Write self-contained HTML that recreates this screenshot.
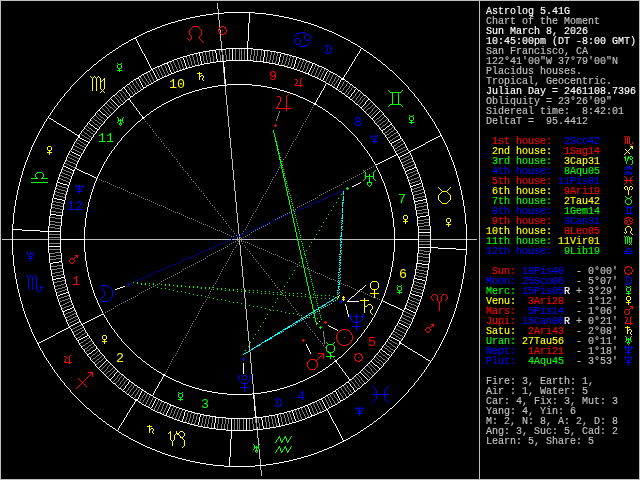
<!DOCTYPE html><html><head><meta charset="utf-8"><title>Astrolog 5.41G</title><style>
html,body{margin:0;padding:0;background:#000;}
body{width:640px;height:480px;overflow:hidden;position:relative;}
svg{position:absolute;left:0;top:0;will-change:transform;}
#side{position:absolute;left:486px;top:7px;margin:0;font:10px/10px "Liberation Mono",monospace;white-space:pre;color:#c0c0c0;-webkit-text-stroke:0.15px;will-change:transform;}
#side div{height:10px;}
.h{font:13.33px "Liberation Mono",monospace;}
</style></head><body>
<svg width="640" height="480" viewBox="0 0 640 480" shape-rendering="crispEdges"><g fill="none" stroke-width="1" transform="translate(0,0.5)">
<path stroke="#c0c0c0" d="M0 0h640M0 1h1M479 1h1M639 1h1M0 2h1M479 2h1M639 2h1M0 3h1M217 3h1M479 3h1M639 3h1M0 4h1M217 4h1M479 4h1M639 4h1M0 5h1M217 5h1M479 5h1M639 5h1M0 6h1M217 6h1M479 6h1M639 6h1M0 7h1M217 7h1M479 7h1M639 7h1M0 8h1M217 8h1M479 8h1M639 8h1M0 9h1M218 9h1M479 9h1M639 9h1M0 10h1M218 10h1M479 10h1M639 10h1M0 11h1M218 11h1M479 11h1M639 11h1M0 12h1M218 12h1M479 12h1M639 12h1M0 13h1M479 13h1M639 13h1M0 14h1M218 14h1M479 14h1M639 14h1M0 15h1M218 15h1M479 15h1M639 15h1M0 16h1M218 16h1M479 16h1M639 16h1M0 17h1M218 17h1M479 17h1M639 17h1M0 18h1M218 18h1M479 18h1M639 18h1M0 19h1M218 19h1M479 19h1M639 19h1M0 20h1M219 20h1M479 20h1M639 20h1M0 21h1M219 21h1M479 21h1M639 21h1M0 22h1M219 22h1M479 22h1M639 22h1M0 23h1M219 23h1M479 23h1M639 23h1M0 24h1M219 24h1M479 24h1M639 24h1M0 25h1M219 25h1M479 25h1M639 25h1M0 26h1M219 26h1M479 26h1M639 26h1M0 27h1M479 27h1M639 27h1M0 28h1M479 28h1M639 28h1M0 29h1M219 29h1M479 29h1M639 29h1M0 30h1M220 30h1M479 30h1M639 30h1M0 31h1M220 31h1M479 31h1M639 31h1M0 32h1M220 32h1M479 32h1M639 32h1M0 33h1M479 33h1M639 33h1M0 34h1M220 34h1M479 34h1M639 34h1M0 35h1M220 35h1M479 35h1M639 35h1M0 36h1M220 36h1M479 36h1M639 36h1M0 37h1M220 37h1M479 37h1M639 37h1M0 38h1M220 38h1M479 38h1M639 38h1M0 39h1M220 39h1M479 39h1M639 39h1M0 40h1M220 40h1M479 40h1M639 40h1M0 41h1M221 41h1M479 41h1M639 41h1M0 42h1M221 42h1M479 42h1M639 42h1M0 43h1M221 43h1M479 43h1M639 43h1M0 44h1M221 44h1M479 44h1M639 44h1M0 45h1M221 45h1M479 45h1M639 45h1M0 46h1M221 46h1M479 46h1M639 46h1M0 47h1M221 47h1M479 47h1M639 47h1M0 48h1M221 48h1M479 48h1M639 48h1M0 49h1M479 49h1M639 49h1M0 50h1M221 50h1M479 50h1M639 50h1M0 51h1M221 51h1M479 51h1M639 51h1M0 52h1M479 52h1M639 52h1M0 53h1M479 53h1M639 53h1M0 54h1M479 54h1M639 54h1M0 55h1M222 55h1M479 55h1M639 55h1M0 56h1M222 56h1M479 56h1M639 56h1M0 57h1M222 57h1M479 57h1M639 57h1M0 58h1M222 58h1M479 58h1M639 58h1M0 59h1M222 59h1M479 59h1M639 59h1M0 60h1M222 60h1M479 60h1M639 60h1M0 61h1M479 61h1M639 61h1M0 62h1M479 62h1M639 62h1M0 63h1M479 63h1M639 63h1M0 64h1M479 64h1M639 64h1M0 65h1M479 65h1M639 65h1M0 66h1M479 66h1M639 66h1M0 67h1M223 67h1M479 67h1M639 67h1M0 68h1M223 68h1M479 68h1M639 68h1M0 69h1M223 69h1M479 69h1M639 69h1M0 70h1M223 70h1M479 70h1M639 70h1M0 71h1M223 71h1M479 71h1M639 71h1M0 72h1M223 72h1M479 72h1M639 72h1M0 73h1M479 73h1M639 73h1M0 74h1M479 74h1M639 74h1M0 75h1M479 75h1M639 75h1M0 76h1M479 76h1M639 76h1M0 77h1M479 77h1M639 77h1M0 78h1M479 78h1M639 78h1M0 79h1M224 79h1M479 79h1M639 79h1M0 80h1M224 80h1M479 80h1M639 80h1M0 81h1M224 81h1M479 81h1M639 81h1M0 82h1M224 82h1M479 82h1M639 82h1M0 83h1M224 83h1M479 83h1M639 83h1M0 84h1M479 84h1M639 84h1M0 85h1M479 85h1M639 85h1M0 86h1M225 86h1M479 86h1M639 86h1M0 87h1M225 87h1M479 87h1M639 87h1M0 88h1M225 88h1M479 88h1M639 88h1M0 89h1M225 89h1M479 89h1M639 89h1M0 90h1M225 90h1M479 90h1M639 90h1M0 91h1M225 91h1M479 91h1M639 91h1M0 92h1M225 92h1M479 92h1M639 92h1M0 93h1M225 93h1M479 93h1M639 93h1M0 94h1M225 94h1M479 94h1M639 94h1M0 95h1M226 95h1M479 95h1M639 95h1M0 96h1M226 96h1M479 96h1M639 96h1M0 97h1M226 97h1M479 97h1M639 97h1M0 98h1M226 98h1M479 98h1M639 98h1M0 99h1M226 99h1M479 99h1M639 99h1M0 100h1M226 100h1M479 100h1M639 100h1M0 101h1M226 101h1M479 101h1M639 101h1M0 102h1M226 102h1M479 102h1M639 102h1M0 103h1M226 103h1M479 103h1M639 103h1M0 104h1M226 104h1M479 104h1M639 104h1M0 105h1M227 105h1M479 105h1M639 105h1M0 106h1M227 106h1M479 106h1M639 106h1M0 107h1M227 107h1M479 107h1M639 107h1M0 108h1M227 108h1M479 108h1M639 108h1M0 109h1M227 109h1M479 109h1M639 109h1M0 110h1M227 110h1M479 110h1M639 110h1M0 111h1M227 111h1M479 111h1M639 111h1M0 112h1M227 112h1M479 112h1M639 112h1M0 113h1M227 113h1M479 113h1M639 113h1M0 114h1M227 114h1M479 114h1M639 114h1M0 115h1M227 115h1M479 115h1M639 115h1M0 116h1M228 116h1M479 116h1M639 116h1M0 117h1M228 117h1M479 117h1M639 117h1M0 118h1M228 118h1M479 118h1M639 118h1M0 119h1M228 119h1M479 119h1M639 119h1M0 120h1M228 120h1M479 120h1M639 120h1M0 121h1M228 121h1M479 121h1M639 121h1M0 122h1M228 122h1M479 122h1M639 122h1M0 123h1M228 123h1M479 123h1M639 123h1M0 124h1M228 124h1M479 124h1M639 124h1M0 125h1M228 125h1M479 125h1M639 125h1M0 126h1M228 126h1M479 126h1M639 126h1M0 127h1M229 127h1M479 127h1M639 127h1M0 128h1M229 128h1M479 128h1M639 128h1M0 129h1M229 129h1M479 129h1M639 129h1M0 130h1M229 130h1M479 130h1M639 130h1M0 131h1M229 131h1M479 131h1M639 131h1M0 132h1M229 132h1M479 132h1M639 132h1M0 133h1M229 133h1M479 133h1M639 133h1M0 134h1M229 134h1M479 134h1M639 134h1M0 135h1M229 135h1M479 135h1M639 135h1M0 136h1M229 136h1M479 136h1M639 136h1M0 137h1M229 137h1M479 137h1M639 137h1M0 138h1M230 138h1M479 138h1M639 138h1M0 139h1M230 139h1M479 139h1M639 139h1M0 140h1M230 140h1M479 140h1M639 140h1M0 141h1M230 141h1M479 141h1M639 141h1M0 142h1M230 142h1M479 142h1M639 142h1M0 143h1M230 143h1M479 143h1M639 143h1M0 144h1M230 144h1M479 144h1M639 144h1M0 145h1M230 145h1M479 145h1M639 145h1M0 146h1M230 146h1M479 146h1M639 146h1M0 147h1M230 147h1M479 147h1M639 147h1M0 148h1M231 148h1M479 148h1M639 148h1M0 149h1M231 149h1M479 149h1M639 149h1M0 150h1M231 150h1M479 150h1M639 150h1M0 151h1M231 151h1M479 151h1M639 151h1M0 152h1M231 152h1M479 152h1M639 152h1M0 153h1M231 153h1M479 153h1M639 153h1M0 154h1M231 154h1M479 154h1M639 154h1M0 155h1M231 155h1M479 155h1M639 155h1M0 156h1M231 156h1M479 156h1M639 156h1M0 157h1M231 157h1M479 157h1M639 157h1M0 158h1M231 158h1M479 158h1M639 158h1M0 159h1M232 159h1M479 159h1M639 159h1M0 160h1M232 160h1M479 160h1M639 160h1M0 161h1M232 161h1M479 161h1M639 161h1M0 162h1M232 162h1M479 162h1M639 162h1M0 163h1M232 163h1M479 163h1M639 163h1M0 164h1M232 164h1M479 164h1M639 164h1M0 165h1M232 165h1M479 165h1M639 165h1M0 166h1M232 166h1M479 166h1M639 166h1M0 167h1M232 167h1M479 167h1M639 167h1M0 168h1M232 168h1M479 168h1M639 168h1M0 169h1M232 169h1M479 169h1M639 169h1M0 170h1M233 170h1M479 170h1M639 170h1M0 171h1M233 171h1M479 171h1M639 171h1M0 172h1M233 172h1M479 172h1M639 172h1M0 173h1M233 173h1M479 173h1M639 173h1M0 174h1M233 174h1M479 174h1M639 174h1M0 175h1M233 175h1M479 175h1M639 175h1M0 176h1M233 176h1M479 176h1M639 176h1M0 177h1M233 177h1M479 177h1M639 177h1M0 178h1M233 178h1M479 178h1M639 178h1M0 179h1M233 179h1M479 179h1M639 179h1M0 180h1M234 180h1M479 180h1M639 180h1M0 181h1M234 181h1M479 181h1M639 181h1M0 182h1M234 182h1M479 182h1M639 182h1M0 183h1M234 183h1M479 183h1M639 183h1M0 184h1M234 184h1M479 184h1M639 184h1M0 185h1M234 185h1M479 185h1M639 185h1M0 186h1M234 186h1M479 186h1M639 186h1M0 187h1M234 187h1M479 187h1M639 187h1M0 188h1M234 188h1M479 188h1M639 188h1M0 189h1M234 189h1M479 189h1M639 189h1M0 190h1M234 190h1M479 190h1M639 190h1M0 191h1M235 191h1M479 191h1M639 191h1M0 192h1M235 192h1M479 192h1M639 192h1M0 193h1M235 193h1M479 193h1M639 193h1M0 194h1M235 194h1M479 194h1M639 194h1M0 195h1M235 195h1M479 195h1M639 195h1M0 196h1M235 196h1M479 196h1M639 196h1M0 197h1M235 197h1M479 197h1M639 197h1M0 198h1M235 198h1M479 198h1M639 198h1M0 199h1M235 199h1M479 199h1M639 199h1M0 200h1M235 200h1M479 200h1M639 200h1M0 201h1M235 201h1M479 201h1M639 201h1M0 202h1M236 202h1M479 202h1M639 202h1M0 203h1M236 203h1M479 203h1M639 203h1M0 204h1M236 204h1M479 204h1M639 204h1M0 205h1M236 205h1M479 205h1M639 205h1M0 206h1M236 206h1M479 206h1M639 206h1M0 207h1M236 207h1M479 207h1M639 207h1M0 208h1M236 208h1M479 208h1M639 208h1M0 209h1M236 209h1M479 209h1M639 209h1M0 210h1M236 210h1M479 210h1M639 210h1M0 211h1M236 211h1M479 211h1M639 211h1M0 212h1M236 212h1M479 212h1M639 212h1M0 213h1M237 213h1M479 213h1M639 213h1M0 214h1M237 214h1M479 214h1M639 214h1M0 215h1M237 215h1M479 215h1M639 215h1M0 216h1M237 216h1M479 216h1M639 216h1M0 217h1M237 217h1M479 217h1M639 217h1M0 218h1M237 218h1M479 218h1M639 218h1M0 219h1M237 219h1M479 219h1M639 219h1M0 220h1M237 220h1M479 220h1M639 220h1M0 221h1M237 221h1M479 221h1M639 221h1M0 222h1M237 222h1M479 222h1M639 222h1M0 223h1M238 223h1M479 223h1M639 223h1M0 224h1M238 224h1M479 224h1M639 224h1M0 225h1M238 225h1M479 225h1M639 225h1M0 226h1M238 226h1M479 226h1M639 226h1M0 227h1M238 227h1M479 227h1M639 227h1M0 228h1M238 228h1M479 228h1M639 228h1M0 229h1M238 229h1M479 229h1M639 229h1M0 230h1M238 230h1M479 230h1M639 230h1M0 231h1M238 231h1M479 231h1M639 231h1M0 232h1M238 232h1M479 232h1M639 232h1M0 233h1M238 233h1M479 233h1M639 233h1M0 234h1M239 234h1M479 234h1M639 234h1M0 235h1M239 235h1M479 235h1M639 235h1M0 236h1M479 236h1M639 236h1M0 237h1M239 237h1M479 237h1M639 237h1M0 238h1M239 238h1M479 238h1M639 238h1M0 239h1M2 239h10M13 239h35M85 239h146M232 239h7M240 239h57M298 239h3M302 239h39M342 239h52M431 239h35M467 239h10M479 239h1M639 239h1M0 240h1M239 240h1M479 240h1M639 240h1M0 241h1M239 241h1M479 241h1M639 241h1M0 242h1M239 242h1M479 242h1M639 242h1M0 243h1M239 243h1M479 243h1M639 243h1M0 244h1M239 244h1M479 244h1M639 244h1M0 245h1M240 245h1M479 245h1M639 245h1M0 246h1M240 246h1M479 246h1M639 246h1M0 247h1M240 247h1M479 247h1M639 247h1M0 248h1M240 248h1M479 248h1M639 248h1M0 249h1M240 249h1M479 249h1M639 249h1M0 250h1M240 250h1M479 250h1M639 250h1M0 251h1M240 251h1M479 251h1M639 251h1M0 252h1M240 252h1M479 252h1M639 252h1M0 253h1M240 253h1M479 253h1M639 253h1M0 254h1M240 254h1M479 254h1M639 254h1M0 255h1M240 255h1M479 255h1M639 255h1M0 256h1M241 256h1M479 256h1M639 256h1M0 257h1M241 257h1M479 257h1M639 257h1M0 258h1M241 258h1M479 258h1M639 258h1M0 259h1M241 259h1M479 259h1M639 259h1M0 260h1M241 260h1M479 260h1M639 260h1M0 261h1M241 261h1M479 261h1M639 261h1M0 262h1M241 262h1M479 262h1M639 262h1M0 263h1M241 263h1M479 263h1M639 263h1M0 264h1M241 264h1M479 264h1M639 264h1M0 265h1M241 265h1M479 265h1M639 265h1M0 266h1M242 266h1M479 266h1M639 266h1M0 267h1M242 267h1M479 267h1M639 267h1M0 268h1M242 268h1M479 268h1M639 268h1M0 269h1M242 269h1M479 269h1M639 269h1M0 270h1M242 270h1M479 270h1M639 270h1M0 271h1M242 271h1M479 271h1M639 271h1M0 272h1M242 272h1M479 272h1M639 272h1M0 273h1M242 273h1M479 273h1M639 273h1M0 274h1M242 274h1M479 274h1M639 274h1M0 275h1M242 275h1M479 275h1M639 275h1M0 276h1M242 276h1M479 276h1M639 276h1M0 277h1M243 277h1M479 277h1M639 277h1M0 278h1M243 278h1M479 278h1M639 278h1M0 279h1M243 279h1M479 279h1M639 279h1M0 280h1M243 280h1M479 280h1M639 280h1M0 281h1M243 281h1M479 281h1M639 281h1M0 282h1M243 282h1M479 282h1M639 282h1M0 283h1M243 283h1M479 283h1M639 283h1M0 284h1M243 284h1M479 284h1M639 284h1M0 285h1M243 285h1M479 285h1M639 285h1M0 286h1M243 286h1M479 286h1M639 286h1M0 287h1M243 287h1M479 287h1M639 287h1M0 288h1M244 288h1M479 288h1M639 288h1M0 289h1M244 289h1M479 289h1M639 289h1M0 290h1M244 290h1M479 290h1M639 290h1M0 291h1M244 291h1M479 291h1M639 291h1M0 292h1M244 292h1M479 292h1M639 292h1M0 293h1M244 293h1M479 293h1M639 293h1M0 294h1M244 294h1M479 294h1M639 294h1M0 295h1M244 295h1M479 295h1M639 295h1M0 296h1M244 296h1M479 296h1M639 296h1M0 297h1M244 297h1M479 297h1M639 297h1M0 298h1M245 298h1M479 298h1M639 298h1M0 299h1M245 299h1M479 299h1M639 299h1M0 300h1M245 300h1M479 300h1M639 300h1M0 301h1M245 301h1M479 301h1M639 301h1M0 302h1M245 302h1M479 302h1M639 302h1M0 303h1M245 303h1M479 303h1M639 303h1M0 304h1M479 304h1M639 304h1M0 305h1M245 305h1M479 305h1M639 305h1M0 306h1M245 306h1M479 306h1M639 306h1M0 307h1M245 307h1M479 307h1M639 307h1M0 308h1M245 308h1M479 308h1M639 308h1M0 309h1M246 309h1M479 309h1M639 309h1M0 310h1M246 310h1M479 310h1M639 310h1M0 311h1M246 311h1M479 311h1M639 311h1M0 312h1M246 312h1M479 312h1M639 312h1M0 313h1M246 313h1M479 313h1M639 313h1M0 314h1M246 314h1M479 314h1M639 314h1M0 315h1M246 315h1M479 315h1M639 315h1M0 316h1M246 316h1M479 316h1M639 316h1M0 317h1M246 317h1M479 317h1M639 317h1M0 318h1M246 318h1M479 318h1M639 318h1M0 319h1M246 319h1M479 319h1M639 319h1M0 320h1M247 320h1M479 320h1M639 320h1M0 321h1M247 321h1M479 321h1M639 321h1M0 322h1M247 322h1M479 322h1M639 322h1M0 323h1M247 323h1M479 323h1M639 323h1M0 324h1M247 324h1M479 324h1M639 324h1M0 325h1M247 325h1M479 325h1M639 325h1M0 326h1M247 326h1M479 326h1M639 326h1M0 327h1M247 327h1M479 327h1M639 327h1M0 328h1M247 328h1M479 328h1M639 328h1M0 329h1M247 329h1M479 329h1M639 329h1M0 330h1M247 330h1M479 330h1M639 330h1M0 331h1M248 331h1M479 331h1M639 331h1M0 332h1M248 332h1M479 332h1M639 332h1M0 333h1M248 333h1M479 333h1M639 333h1M0 334h1M248 334h1M479 334h1M639 334h1M0 335h1M248 335h1M479 335h1M639 335h1M0 336h1M248 336h1M479 336h1M639 336h1M0 337h1M248 337h1M479 337h1M639 337h1M0 338h1M248 338h1M479 338h1M639 338h1M0 339h1M248 339h1M479 339h1M639 339h1M0 340h1M248 340h1M479 340h1M639 340h1M0 341h1M249 341h1M479 341h1M639 341h1M0 342h1M249 342h1M479 342h1M639 342h1M0 343h1M249 343h1M479 343h1M639 343h1M0 344h1M249 344h1M479 344h1M639 344h1M0 345h1M249 345h1M479 345h1M639 345h1M0 346h1M249 346h1M479 346h1M639 346h1M0 347h1M249 347h1M479 347h1M639 347h1M0 348h1M249 348h1M479 348h1M639 348h1M0 349h1M249 349h1M479 349h1M639 349h1M0 350h1M479 350h1M639 350h1M0 351h1M249 351h1M479 351h1M639 351h1M0 352h1M250 352h1M479 352h1M639 352h1M0 353h1M250 353h1M479 353h1M639 353h1M0 354h1M250 354h1M479 354h1M639 354h1M0 355h1M250 355h1M479 355h1M639 355h1M0 356h1M250 356h1M479 356h1M639 356h1M0 357h1M250 357h1M479 357h1M639 357h1M0 358h1M250 358h1M479 358h1M639 358h1M0 359h1M250 359h1M479 359h1M639 359h1M0 360h1M250 360h1M479 360h1M639 360h1M0 361h1M250 361h1M479 361h1M639 361h1M0 362h1M250 362h1M479 362h1M639 362h1M0 363h1M251 363h1M479 363h1M639 363h1M0 364h1M251 364h1M479 364h1M639 364h1M0 365h1M251 365h1M479 365h1M639 365h1M0 366h1M251 366h1M479 366h1M639 366h1M0 367h1M251 367h1M479 367h1M639 367h1M0 368h1M251 368h1M479 368h1M639 368h1M0 369h1M251 369h1M479 369h1M639 369h1M0 370h1M251 370h1M479 370h1M639 370h1M0 371h1M251 371h1M479 371h1M639 371h1M0 372h1M251 372h1M479 372h1M639 372h1M0 373h1M251 373h1M479 373h1M639 373h1M0 374h1M252 374h1M479 374h1M639 374h1M0 375h1M252 375h1M479 375h1M639 375h1M0 376h1M252 376h1M479 376h1M639 376h1M0 377h1M252 377h1M479 377h1M639 377h1M0 378h1M252 378h1M479 378h1M639 378h1M0 379h1M252 379h1M479 379h1M639 379h1M0 380h1M252 380h1M479 380h1M639 380h1M0 381h1M252 381h1M479 381h1M639 381h1M0 382h1M252 382h1M479 382h1M639 382h1M0 383h1M252 383h1M479 383h1M639 383h1M0 384h1M253 384h1M479 384h1M639 384h1M0 385h1M253 385h1M479 385h1M639 385h1M0 386h1M253 386h1M479 386h1M639 386h1M0 387h1M253 387h1M479 387h1M639 387h1M0 388h1M253 388h1M479 388h1M639 388h1M0 389h1M253 389h1M479 389h1M639 389h1M0 390h1M253 390h1M479 390h1M639 390h1M0 391h1M253 391h1M479 391h1M639 391h1M0 392h1M253 392h1M479 392h1M639 392h1M0 393h1M479 393h1M639 393h1M0 394h1M479 394h1M639 394h1M0 395h1M254 395h1M479 395h1M639 395h1M0 396h1M254 396h1M479 396h1M639 396h1M0 397h1M254 397h1M479 397h1M639 397h1M0 398h1M254 398h1M479 398h1M639 398h1M0 399h1M479 399h1M639 399h1M0 400h1M479 400h1M639 400h1M0 401h1M479 401h1M639 401h1M0 402h1M479 402h1M639 402h1M0 403h1M479 403h1M639 403h1M0 404h1M479 404h1M639 404h1M0 405h1M479 405h1M639 405h1M0 406h1M255 406h1M479 406h1M639 406h1M0 407h1M255 407h1M479 407h1M639 407h1M0 408h1M255 408h1M479 408h1M639 408h1M0 409h1M255 409h1M479 409h1M639 409h1M0 410h1M255 410h1M479 410h1M639 410h1M0 411h1M479 411h1M639 411h1M0 412h1M479 412h1M639 412h1M0 413h1M479 413h1M639 413h1M0 414h1M479 414h1M639 414h1M0 415h1M479 415h1M639 415h1M0 416h1M256 416h1M479 416h1M639 416h1M0 417h1M479 417h1M639 417h1M0 418h1M256 418h1M479 418h1M639 418h1M0 419h1M256 419h1M479 419h1M639 419h1M0 420h1M256 420h1M479 420h1M639 420h1M0 421h1M256 421h1M479 421h1M639 421h1M0 422h1M256 422h1M479 422h1M639 422h1M0 423h1M479 423h1M639 423h1M0 424h1M479 424h1M639 424h1M0 425h1M479 425h1M639 425h1M0 426h1M479 426h1M639 426h1M0 427h1M257 427h1M479 427h1M639 427h1M0 428h1M257 428h1M479 428h1M639 428h1M0 429h1M479 429h1M639 429h1M0 430h1M257 430h1M479 430h1M639 430h1M0 431h1M257 431h1M479 431h1M639 431h1M0 432h1M257 432h1M479 432h1M639 432h1M0 433h1M257 433h1M479 433h1M639 433h1M0 434h1M257 434h1M479 434h1M639 434h1M0 435h1M257 435h1M479 435h1M639 435h1M0 436h1M257 436h1M479 436h1M639 436h1M0 437h1M257 437h1M479 437h1M639 437h1M0 438h1M258 438h1M479 438h1M639 438h1M0 439h1M258 439h1M479 439h1M639 439h1M0 440h1M258 440h1M479 440h1M639 440h1M0 441h1M258 441h1M479 441h1M639 441h1M0 442h1M258 442h1M479 442h1M639 442h1M0 443h1M258 443h1M479 443h1M639 443h1M0 444h1M258 444h1M479 444h1M639 444h1M0 445h1M479 445h1M639 445h1M0 446h1M479 446h1M639 446h1M0 447h1M479 447h1M639 447h1M0 448h1M479 448h1M639 448h1M0 449h1M479 449h1M639 449h1M0 450h1M259 450h1M479 450h1M639 450h1M0 451h1M259 451h1M479 451h1M639 451h1M0 452h1M259 452h1M479 452h1M639 452h1M0 453h1M259 453h1M479 453h1M639 453h1M0 454h1M259 454h1M479 454h1M639 454h1M0 455h1M259 455h1M479 455h1M639 455h1M0 456h1M259 456h1M479 456h1M639 456h1M0 457h1M259 457h1M479 457h1M639 457h1M0 458h1M259 458h1M479 458h1M639 458h1M0 459h1M260 459h1M479 459h1M639 459h1M0 460h1M260 460h1M479 460h1M639 460h1M0 461h1M260 461h1M479 461h1M639 461h1M0 462h1M260 462h1M479 462h1M639 462h1M0 463h1M260 463h1M479 463h1M639 463h1M0 464h1M260 464h1M479 464h1M639 464h1M0 465h1M479 465h1M639 465h1M0 466h1M260 466h1M479 466h1M639 466h1M0 467h1M260 467h1M479 467h1M639 467h1M0 468h1M260 468h1M479 468h1M639 468h1M0 469h1M260 469h1M479 469h1M639 469h1M0 470h1M261 470h1M479 470h1M639 470h1M0 471h1M261 471h1M479 471h1M639 471h1M0 472h1M261 472h1M479 472h1M639 472h1M0 473h1M261 473h1M479 473h1M639 473h1M0 474h1M261 474h1M479 474h1M639 474h1M0 475h1M261 475h1M479 475h1M639 475h1M0 476h1M479 476h1M639 476h1M0 477h1M479 477h1M639 477h1M0 478h1M479 478h1M639 478h1M0 479h640"/>
<path stroke="#ffffff" d="M224 12h31M213 13h11M249 13h1M255 13h11M206 14h7M249 14h1M266 14h7M200 15h6M249 15h1M273 15h6M195 16h5M249 16h1M279 16h5M190 17h5M249 17h1M284 17h5M186 18h4M249 18h1M289 18h4M182 19h4M249 19h1M293 19h4M178 20h4M249 20h1M297 20h4M175 21h3M249 21h1M301 21h3M171 22h4M249 22h1M304 22h4M168 23h3M248 23h1M308 23h3M165 24h3M248 24h1M311 24h3M162 25h3M248 25h1M314 25h3M160 26h2M248 26h1M317 26h2M157 27h3M248 27h1M319 27h3M155 28h2M248 28h1M322 28h2M152 29h3M248 29h1M324 29h3M150 30h2M248 30h1M327 30h2M147 31h3M248 31h1M329 31h3M145 32h2M248 32h1M332 32h2M143 33h2M248 33h1M334 33h2M141 34h2M248 34h1M336 34h2M139 35h2M248 35h1M338 35h2M137 36h2M248 36h1M340 36h2M135 37h2M248 37h1M342 37h2M133 38h3M248 38h1M344 38h2M131 39h2M136 39h1M248 39h1M346 39h2M129 40h2M136 40h1M248 40h1M348 40h2M128 41h1M137 41h1M247 41h1M350 41h1M126 42h2M137 42h1M247 42h1M351 42h2M124 43h2M138 43h1M247 43h1M353 43h2M122 44h2M138 44h1M247 44h1M355 44h2M121 45h1M139 45h1M247 45h1M357 45h1M119 46h2M139 46h1M247 46h1M358 46h2M118 47h1M140 47h1M247 47h1M360 47h1M116 48h2M140 48h1M226 48h27M361 48h2M115 49h1M141 49h1M216 49h10M232 49h1M247 49h1M253 49h10M360 49h1M363 49h1M113 50h2M141 50h1M209 50h7M232 50h1M247 50h1M263 50h7M360 50h1M364 50h2M112 51h1M142 51h1M203 51h6M215 51h1M232 51h1M247 51h1M264 51h1M270 51h6M359 51h1M366 51h1M110 52h2M142 52h1M198 52h5M215 52h1M232 52h1M247 52h1M264 52h1M276 52h5M359 52h1M367 52h2M109 53h1M143 53h1M194 53h4M199 53h1M216 53h1M232 53h1M247 53h1M264 53h1M281 53h4M358 53h1M369 53h1M107 54h2M144 54h1M190 54h4M199 54h1M216 54h1M232 54h1M247 54h1M264 54h1M280 54h1M285 54h4M357 54h1M370 54h2M106 55h1M144 55h1M187 55h3M199 55h1M216 55h1M232 55h1M247 55h1M264 55h1M280 55h1M289 55h3M357 55h1M372 55h1M105 56h1M145 56h1M183 56h4M200 56h1M216 56h1M232 56h1M247 56h1M264 56h1M280 56h1M292 56h4M356 56h1M373 56h1M103 57h2M145 57h1M180 57h3M200 57h1M216 57h1M232 57h1M247 57h1M263 57h1M279 57h1M296 57h3M355 57h1M374 57h2M102 58h1M146 58h1M177 58h3M183 58h1M200 58h1M216 58h1M232 58h1M247 58h1M263 58h1M279 58h1M296 58h1M299 58h3M355 58h1M376 58h1M101 59h1M146 59h1M174 59h3M183 59h1M200 59h1M217 59h1M232 59h1M247 59h1M263 59h1M279 59h1M296 59h1M302 59h3M354 59h1M377 59h1M99 60h2M147 60h1M172 60h2M184 60h1M200 60h1M217 60h1M226 60h27M263 60h1M279 60h1M295 60h1M305 60h2M354 60h1M378 60h2M98 61h1M147 61h1M169 61h3M184 61h1M201 61h1M216 61h10M253 61h11M279 61h1M295 61h1M307 61h3M353 61h1M380 61h1M97 62h1M148 62h1M167 62h2M184 62h1M201 62h1M210 62h6M223 62h1M263 62h6M278 62h1M295 62h1M310 62h2M352 62h1M381 62h1M96 63h1M148 63h1M164 63h4M185 63h1M201 63h1M204 63h6M223 63h1M269 63h6M278 63h1M295 63h1M312 63h3M352 63h1M382 63h1M94 64h2M149 64h1M162 64h2M167 64h1M185 64h1M200 64h4M223 64h1M275 64h4M294 64h1M312 64h1M315 64h2M351 64h1M383 64h2M93 65h1M149 65h1M160 65h2M168 65h1M185 65h1M195 65h5M223 65h1M279 65h5M294 65h1M312 65h1M317 65h2M351 65h1M385 65h1M92 66h1M150 66h1M157 66h3M168 66h1M186 66h1M192 66h3M223 66h1M284 66h3M294 66h1M311 66h1M319 66h3M350 66h1M386 66h1M91 67h1M150 67h1M155 67h2M169 67h1M186 67h1M188 67h4M224 67h1M287 67h4M293 67h1M311 67h1M322 67h2M349 67h1M387 67h1M90 68h1M151 68h1M153 68h2M169 68h1M185 68h3M224 68h1M291 68h3M310 68h1M324 68h2M349 68h1M388 68h1M89 69h1M151 69h2M169 69h1M182 69h3M224 69h1M294 69h3M310 69h1M326 69h2M348 69h1M389 69h1M87 70h2M150 70h1M152 70h1M170 70h1M179 70h3M224 70h1M297 70h3M309 70h1M328 70h1M348 70h1M390 70h2M86 71h1M148 71h2M153 71h1M170 71h1M176 71h3M224 71h1M300 71h3M309 71h1M327 71h1M329 71h2M347 71h1M392 71h1M85 72h1M146 72h2M153 72h1M171 72h1M174 72h2M224 72h1M303 72h2M308 72h1M326 72h1M331 72h2M346 72h1M393 72h1M84 73h1M144 73h2M154 73h1M171 73h3M224 73h1M305 73h4M326 73h1M333 73h2M346 73h1M394 73h1M83 74h1M142 74h2M154 74h1M169 74h2M224 74h1M308 74h2M325 74h1M335 74h2M345 74h1M395 74h1M82 75h1M141 75h1M155 75h1M167 75h2M224 75h1M310 75h2M325 75h1M337 75h1M344 75h1M396 75h1M81 76h1M139 76h2M155 76h1M164 76h3M224 76h1M312 76h3M324 76h1M338 76h2M344 76h1M397 76h1M80 77h1M138 77h1M156 77h1M162 77h2M224 77h1M315 77h2M324 77h1M340 77h1M343 77h1M398 77h1M79 78h1M136 78h3M156 78h1M160 78h2M224 78h1M317 78h2M323 78h1M341 78h3M399 78h1M78 79h1M134 79h2M139 79h1M157 79h3M225 79h1M319 79h2M323 79h1M341 79h4M400 79h1M77 80h1M133 80h1M139 80h1M156 80h2M225 80h1M321 80h2M340 80h1M345 80h1M401 80h1M76 81h1M131 81h2M140 81h1M154 81h2M225 81h1M323 81h2M340 81h1M346 81h2M402 81h1M75 82h1M130 82h1M140 82h1M153 82h1M225 82h1M325 82h1M339 82h1M348 82h1M403 82h1M74 83h1M129 83h1M141 83h1M151 83h2M225 83h1M326 83h2M339 83h1M349 83h1M404 83h1M73 84h1M127 84h2M141 84h1M149 84h2M225 84h1M227 84h25M325 84h1M328 84h2M338 84h1M350 84h2M405 84h1M72 85h1M126 85h1M142 85h1M147 85h2M218 85h9M252 85h9M325 85h1M330 85h2M338 85h1M352 85h1M406 85h1M71 86h1M125 86h1M142 86h1M146 86h1M212 86h6M261 86h6M324 86h1M332 86h1M337 86h1M353 86h1M407 86h1M70 87h1M123 87h2M143 87h3M207 87h5M267 87h5M324 87h1M333 87h2M337 87h1M354 87h2M408 87h1M70 88h1M122 88h1M124 88h1M143 88h1M202 88h5M272 88h5M323 88h1M335 88h2M356 88h1M408 88h1M69 89h1M121 89h1M125 89h1M141 89h2M199 89h3M277 89h3M323 89h1M336 89h2M355 89h1M357 89h1M409 89h1M68 90h1M119 90h2M126 90h1M140 90h1M195 90h4M280 90h4M322 90h1M338 90h1M354 90h1M358 90h2M410 90h1M67 91h1M118 91h1M126 91h1M138 91h2M192 91h3M284 91h3M321 91h1M339 91h2M354 91h1M360 91h1M411 91h1M66 92h1M117 92h1M127 92h1M137 92h1M189 92h3M287 92h3M321 92h1M341 92h1M353 92h1M361 92h1M412 92h1M65 93h1M116 93h1M128 93h1M135 93h2M186 93h3M290 93h3M320 93h1M342 93h2M352 93h1M362 93h1M413 93h1M64 94h1M115 94h1M129 94h1M134 94h1M183 94h3M293 94h3M320 94h1M344 94h1M351 94h1M363 94h1M414 94h1M64 95h1M113 95h2M129 95h1M133 95h1M181 95h2M296 95h2M319 95h1M345 95h1M351 95h1M364 95h2M414 95h1M63 96h1M112 96h1M130 96h3M179 96h2M298 96h2M319 96h1M346 96h2M350 96h1M366 96h1M415 96h1M62 97h1M111 97h1M130 97h1M176 97h3M300 97h3M318 97h1M348 97h2M367 97h1M416 97h1M61 98h1M110 98h1M129 98h1M174 98h2M303 98h2M317 98h1M349 98h1M368 98h1M417 98h1M60 99h1M109 99h1M111 99h1M127 99h3M172 99h2M305 99h2M317 99h1M350 99h2M368 99h2M418 99h1M60 100h1M108 100h1M112 100h1M126 100h1M130 100h1M170 100h2M307 100h2M316 100h1M352 100h1M367 100h1M370 100h1M418 100h1M59 101h1M107 101h1M113 101h1M125 101h1M130 101h1M168 101h2M309 101h2M316 101h1M353 101h1M366 101h1M371 101h1M419 101h1M58 102h1M106 102h1M114 102h1M124 102h1M131 102h1M166 102h2M311 102h2M315 102h1M354 102h1M365 102h1M372 102h1M420 102h1M57 103h1M105 103h1M115 103h1M123 103h1M132 103h1M164 103h2M313 103h3M355 103h1M365 103h1M373 103h1M421 103h1M57 104h1M104 104h1M116 104h1M121 104h2M133 104h1M162 104h2M314 104h3M356 104h2M364 104h1M374 104h1M421 104h1M56 105h1M103 105h1M117 105h1M120 105h1M133 105h1M161 105h1M317 105h1M358 105h1M363 105h1M375 105h1M422 105h1M55 106h1M102 106h1M118 106h2M134 106h1M159 106h2M318 106h2M359 106h1M362 106h1M376 106h1M423 106h1M54 107h1M101 107h1M118 107h1M135 107h1M157 107h2M320 107h2M360 107h2M377 107h1M424 107h1M54 108h1M100 108h1M117 108h1M136 108h1M156 108h1M322 108h1M361 108h1M378 108h1M424 108h1M53 109h1M99 109h1M116 109h1M136 109h1M154 109h2M323 109h2M362 109h1M379 109h1M425 109h1M52 110h1M98 110h2M115 110h1M137 110h1M153 110h1M325 110h1M363 110h1M380 110h1M426 110h1M52 111h1M97 111h1M100 111h1M114 111h1M138 111h1M151 111h2M326 111h2M364 111h1M379 111h1M381 111h1M426 111h1M51 112h1M96 112h1M101 112h1M113 112h1M139 112h1M150 112h1M328 112h1M365 112h1M378 112h1M382 112h1M427 112h1M50 113h1M95 113h1M102 113h1M112 113h1M139 113h1M149 113h1M329 113h1M366 113h1M377 113h1M383 113h1M428 113h1M50 114h1M95 114h1M103 114h2M111 114h1M140 114h1M147 114h2M330 114h2M367 114h1M376 114h1M383 114h1M428 114h1M49 115h1M94 115h1M105 115h1M110 115h1M141 115h1M146 115h1M332 115h1M368 115h1M375 115h1M384 115h1M429 115h1M48 116h1M93 116h1M106 116h1M109 116h1M142 116h1M145 116h1M333 116h1M369 116h1M374 116h1M385 116h1M430 116h1M48 117h1M92 117h1M107 117h2M142 117h3M334 117h2M370 117h1M373 117h1M386 117h1M430 117h1M47 118h1M49 118h2M91 118h1M107 118h1M142 118h2M336 118h1M371 118h2M387 118h1M431 118h1M46 119h1M51 119h2M90 119h1M106 119h1M141 119h1M337 119h1M372 119h1M388 119h1M432 119h1M46 120h1M53 120h1M90 120h1M105 120h1M140 120h1M338 120h1M373 120h1M388 120h1M432 120h1M45 121h1M54 121h2M89 121h1M104 121h1M138 121h2M339 121h2M374 121h1M389 121h1M433 121h1M44 122h1M56 122h1M88 122h1M104 122h1M137 122h1M341 122h1M374 122h1M390 122h1M434 122h1M44 123h1M57 123h2M87 123h1M89 123h1M103 123h1M136 123h1M342 123h1M375 123h1M391 123h1M434 123h1M43 124h1M59 124h2M87 124h1M90 124h1M102 124h1M135 124h1M343 124h1M376 124h1M390 124h2M435 124h1M43 125h1M61 125h1M86 125h1M91 125h2M101 125h1M134 125h1M344 125h1M377 125h1M389 125h1M392 125h1M435 125h1M42 126h1M62 126h2M85 126h1M93 126h1M100 126h1M133 126h1M345 126h1M378 126h1M387 126h2M393 126h1M436 126h1M42 127h1M64 127h2M84 127h1M94 127h1M99 127h1M132 127h1M346 127h1M379 127h1M386 127h1M394 127h1M436 127h1M41 128h1M66 128h1M84 128h1M95 128h2M99 128h1M131 128h1M347 128h1M379 128h1M385 128h1M394 128h1M437 128h1M40 129h1M67 129h2M83 129h1M97 129h2M130 129h1M348 129h1M380 129h1M383 129h2M395 129h1M438 129h1M40 130h1M69 130h2M82 130h1M97 130h1M129 130h1M349 130h1M381 130h2M396 130h1M438 130h1M39 131h1M71 131h1M81 131h1M96 131h1M128 131h1M350 131h1M382 131h1M397 131h1M439 131h1M39 132h1M72 132h2M81 132h1M96 132h1M127 132h1M351 132h1M382 132h1M397 132h1M439 132h1M38 133h1M74 133h1M80 133h1M95 133h1M126 133h1M352 133h1M383 133h1M398 133h1M440 133h1M38 134h1M75 134h2M79 134h1M94 134h1M125 134h1M353 134h1M384 134h1M399 134h1M440 134h1M37 135h1M77 135h3M93 135h1M124 135h1M354 135h1M385 135h1M399 135h1M440 135h2M37 136h1M78 136h2M93 136h1M123 136h1M355 136h1M385 136h1M400 136h1M438 136h2M441 136h1M36 137h1M78 137h2M92 137h1M122 137h1M356 137h1M386 137h1M400 137h1M436 137h2M442 137h1M36 138h1M77 138h1M80 138h2M91 138h1M121 138h1M357 138h1M387 138h1M400 138h2M434 138h2M442 138h1M35 139h1M76 139h1M82 139h2M91 139h1M121 139h1M357 139h1M387 139h1M398 139h2M402 139h1M432 139h2M443 139h1M35 140h1M76 140h1M84 140h2M90 140h1M120 140h1M358 140h1M388 140h1M396 140h2M402 140h1M430 140h2M443 140h1M34 141h1M75 141h1M86 141h2M89 141h1M119 141h1M359 141h1M389 141h1M394 141h2M403 141h1M428 141h2M444 141h1M34 142h1M74 142h1M88 142h2M118 142h1M360 142h1M389 142h1M392 142h2M404 142h1M426 142h2M444 142h1M33 143h1M74 143h1M88 143h1M117 143h1M361 143h1M390 143h2M404 143h1M425 143h1M445 143h1M33 144h1M73 144h1M87 144h1M117 144h1M361 144h1M391 144h1M405 144h1M423 144h2M445 144h1M32 145h1M73 145h1M87 145h1M116 145h1M362 145h1M391 145h1M405 145h1M421 145h2M446 145h1M32 146h1M72 146h1M86 146h1M115 146h1M363 146h1M392 146h1M406 146h1M419 146h2M446 146h1M31 147h1M72 147h1M85 147h1M114 147h1M364 147h1M393 147h1M406 147h1M417 147h2M447 147h1M31 148h1M71 148h1M85 148h1M114 148h1M364 148h1M393 148h1M407 148h1M415 148h2M447 148h1M31 149h1M71 149h1M84 149h1M113 149h1M365 149h1M394 149h1M407 149h1M413 149h2M447 149h1M30 150h1M70 150h1M84 150h1M112 150h1M366 150h1M394 150h1M408 150h1M411 150h2M448 150h1M30 151h1M69 151h1M71 151h1M83 151h1M111 151h1M367 151h1M395 151h1M409 151h2M448 151h1M29 152h1M69 152h1M72 152h2M83 152h1M111 152h1M367 152h1M395 152h1M408 152h2M449 152h1M29 153h1M68 153h1M74 153h2M82 153h1M110 153h1M368 153h1M396 153h1M406 153h2M410 153h1M449 153h1M29 154h1M68 154h1M76 154h2M81 154h1M109 154h1M369 154h1M396 154h2M404 154h2M410 154h1M449 154h1M28 155h1M67 155h1M78 155h2M81 155h1M109 155h1M369 155h1M394 155h2M397 155h1M402 155h2M411 155h1M450 155h1M28 156h1M67 156h1M80 156h1M108 156h1M370 156h1M392 156h2M398 156h1M400 156h2M411 156h1M450 156h1M27 157h1M66 157h1M80 157h1M107 157h1M371 157h1M390 157h2M398 157h2M412 157h1M451 157h1M27 158h1M66 158h1M79 158h1M107 158h1M371 158h1M388 158h2M399 158h1M412 158h1M451 158h1M27 159h1M66 159h1M79 159h1M106 159h1M372 159h1M386 159h2M399 159h1M412 159h1M451 159h1M26 160h1M65 160h1M78 160h1M106 160h1M372 160h1M384 160h2M400 160h1M413 160h1M452 160h1M26 161h1M65 161h1M78 161h1M105 161h1M373 161h1M382 161h2M400 161h1M413 161h1M452 161h1M25 162h1M64 162h1M77 162h1M104 162h1M374 162h1M380 162h2M401 162h1M414 162h1M453 162h1M25 163h1M64 163h1M77 163h1M104 163h1M374 163h1M378 163h2M401 163h1M414 163h1M453 163h1M25 164h1M63 164h1M76 164h1M103 164h1M375 164h3M402 164h1M415 164h1M453 164h1M24 165h1M63 165h1M76 165h1M103 165h1M402 165h1M415 165h1M454 165h1M24 166h1M63 166h3M76 166h1M102 166h1M376 166h1M402 166h1M415 166h1M454 166h1M24 167h1M62 167h1M66 167h2M75 167h1M102 167h1M376 167h1M403 167h1M414 167h3M454 167h1M23 168h1M62 168h1M68 168h2M75 168h2M101 168h1M377 168h1M403 168h1M412 168h2M416 168h1M455 168h1M23 169h1M61 169h1M70 169h2M74 169h1M77 169h2M101 169h1M377 169h1M404 169h1M409 169h3M417 169h1M455 169h1M23 170h1M61 170h1M72 170h3M79 170h2M100 170h1M378 170h1M404 170h1M407 170h2M417 170h1M455 170h1M22 171h1M61 171h1M73 171h1M81 171h2M100 171h1M378 171h1M405 171h2M417 171h1M456 171h1M22 172h1M60 172h1M73 172h1M83 172h2M99 172h1M379 172h1M405 172h1M418 172h1M456 172h1M22 173h1M60 173h1M73 173h1M85 173h3M99 173h1M379 173h1M405 173h1M418 173h1M456 173h1M22 174h1M59 174h1M72 174h1M88 174h2M98 174h1M380 174h1M406 174h1M419 174h1M456 174h1M21 175h1M59 175h1M72 175h1M90 175h2M98 175h1M380 175h1M406 175h1M419 175h1M457 175h1M21 176h1M59 176h1M71 176h1M92 176h2M97 176h1M381 176h1M407 176h1M419 176h1M457 176h1M21 177h1M58 177h1M71 177h1M94 177h2M97 177h1M381 177h1M407 177h1M420 177h1M457 177h1M20 178h1M58 178h1M71 178h1M96 178h1M381 178h1M407 178h1M420 178h1M458 178h1M20 179h1M58 179h1M70 179h1M96 179h1M382 179h1M408 179h1M420 179h1M458 179h1M20 180h1M57 180h1M70 180h1M96 180h1M382 180h1M408 180h1M421 180h1M458 180h1M20 181h1M57 181h1M70 181h1M95 181h1M383 181h1M408 181h1M421 181h1M458 181h1M19 182h1M57 182h3M69 182h1M95 182h1M360 182h1M383 182h1M409 182h1M421 182h1M459 182h1M19 183h1M56 183h1M60 183h3M69 183h1M94 183h1M358 183h2M384 183h1M409 183h1M419 183h2M422 183h1M459 183h1M19 184h1M56 184h1M63 184h4M69 184h1M94 184h1M356 184h2M384 184h1M409 184h1M416 184h3M422 184h1M459 184h1M19 185h1M56 185h1M67 185h2M94 185h1M354 185h2M384 185h1M410 185h1M413 185h3M422 185h1M459 185h1M18 186h1M56 186h1M68 186h1M93 186h1M352 186h2M385 186h1M410 186h3M422 186h1M460 186h1M18 187h1M55 187h1M68 187h1M93 187h1M385 187h1M410 187h1M423 187h1M460 187h1M18 188h1M55 188h1M67 188h1M93 188h1M385 188h1M411 188h1M423 188h1M460 188h1M18 189h1M55 189h1M67 189h1M92 189h1M386 189h1M411 189h1M423 189h1M460 189h1M17 190h1M54 190h1M67 190h1M92 190h1M386 190h1M411 190h1M424 190h1M461 190h1M17 191h1M54 191h1M67 191h1M92 191h1M386 191h1M411 191h1M424 191h1M461 191h1M17 192h1M54 192h1M66 192h1M91 192h1M387 192h1M412 192h1M424 192h1M461 192h1M17 193h1M54 193h1M66 193h1M91 193h1M387 193h1M412 193h1M424 193h1M461 193h1M17 194h1M53 194h1M66 194h1M91 194h1M387 194h1M412 194h1M425 194h1M461 194h1M16 195h1M53 195h1M65 195h1M90 195h1M388 195h1M413 195h1M425 195h1M462 195h1M16 196h1M53 196h1M65 196h1M90 196h1M388 196h1M413 196h1M425 196h1M462 196h1M16 197h1M53 197h1M65 197h1M90 197h1M388 197h1M413 197h1M425 197h1M462 197h1M16 198h1M52 198h1M54 198h3M65 198h1M90 198h1M388 198h1M413 198h1M426 198h1M462 198h1M16 199h1M52 199h1M57 199h5M65 199h1M89 199h1M389 199h1M413 199h1M423 199h4M462 199h1M15 200h1M52 200h1M62 200h3M89 200h1M389 200h1M414 200h1M418 200h5M426 200h1M463 200h1M15 201h1M52 201h1M64 201h1M89 201h1M389 201h1M414 201h4M426 201h1M463 201h1M15 202h1M52 202h1M64 202h1M88 202h1M390 202h1M414 202h1M426 202h1M463 202h1M15 203h1M51 203h1M64 203h1M88 203h1M390 203h1M414 203h1M427 203h1M463 203h1M15 204h1M51 204h1M63 204h1M88 204h1M390 204h1M415 204h1M427 204h1M463 204h1M15 205h1M51 205h1M63 205h1M88 205h1M390 205h1M415 205h1M427 205h1M463 205h1M14 206h1M51 206h1M63 206h1M88 206h1M390 206h1M415 206h1M427 206h1M464 206h1M14 207h1M51 207h1M63 207h1M87 207h1M391 207h1M415 207h1M427 207h1M464 207h1M14 208h1M51 208h1M63 208h1M87 208h1M391 208h1M415 208h1M427 208h1M464 208h1M14 209h1M50 209h1M63 209h1M87 209h1M391 209h1M415 209h1M428 209h1M464 209h1M14 210h1M50 210h1M62 210h1M87 210h1M391 210h1M416 210h1M428 210h1M464 210h1M14 211h1M50 211h1M62 211h1M87 211h1M391 211h1M416 211h1M428 211h1M464 211h1M14 212h1M50 212h1M62 212h1M86 212h1M392 212h1M416 212h1M428 212h1M464 212h1M13 213h1M50 213h1M62 213h1M86 213h1M392 213h1M416 213h1M428 213h1M465 213h1M13 214h1M50 214h6M62 214h1M86 214h1M392 214h1M416 214h1M428 214h1M465 214h1M13 215h1M50 215h1M56 215h7M86 215h1M392 215h1M416 215h1M426 215h3M465 215h1M13 216h1M49 216h1M61 216h1M86 216h1M392 216h1M417 216h1M420 216h6M429 216h1M465 216h1M13 217h1M49 217h1M61 217h1M86 217h1M392 217h1M417 217h3M429 217h1M465 217h1M13 218h1M49 218h1M61 218h1M85 218h1M393 218h1M417 218h1M429 218h1M465 218h1M13 219h1M49 219h1M61 219h1M85 219h1M393 219h1M417 219h1M429 219h1M465 219h1M13 220h1M49 220h1M61 220h1M85 220h1M393 220h1M417 220h1M429 220h1M465 220h1M13 221h1M49 221h1M61 221h1M85 221h1M393 221h1M417 221h1M429 221h1M465 221h1M13 222h1M49 222h1M61 222h1M85 222h1M393 222h1M417 222h1M429 222h1M465 222h1M13 223h1M49 223h1M61 223h1M85 223h1M393 223h1M417 223h1M429 223h1M465 223h1M12 224h1M49 224h1M61 224h1M85 224h1M393 224h1M417 224h1M429 224h1M466 224h1M12 225h1M49 225h1M61 225h1M85 225h1M393 225h1M417 225h1M429 225h1M466 225h1M12 226h1M48 226h1M60 226h1M85 226h1M393 226h1M418 226h1M430 226h1M466 226h1M12 227h1M48 227h1M60 227h1M84 227h1M394 227h1M418 227h1M430 227h1M466 227h1M12 228h1M48 228h1M60 228h1M84 228h1M394 228h1M418 228h1M430 228h1M466 228h1M12 229h10M48 229h1M60 229h1M84 229h1M394 229h1M418 229h1M430 229h1M466 229h1M12 230h1M22 230h18M48 230h1M60 230h1M84 230h1M394 230h1M418 230h1M430 230h1M466 230h1M12 231h1M40 231h21M84 231h1M394 231h1M418 231h1M430 231h1M466 231h1M12 232h1M48 232h1M60 232h1M84 232h1M394 232h1M418 232h13M466 232h1M12 233h1M48 233h1M60 233h1M84 233h1M394 233h1M418 233h1M430 233h1M466 233h1M12 234h1M48 234h1M60 234h1M84 234h1M394 234h1M418 234h1M430 234h1M466 234h1M12 235h1M48 235h1M60 235h1M84 235h1M394 235h1M418 235h1M430 235h1M466 235h1M12 236h1M48 236h1M60 236h1M84 236h1M394 236h1M418 236h1M430 236h1M466 236h1M12 237h1M48 237h1M60 237h1M84 237h1M394 237h1M418 237h1M430 237h1M466 237h1M12 238h1M48 238h1M60 238h1M84 238h1M394 238h1M418 238h1M430 238h1M466 238h1M12 239h1M48 239h1M60 239h25M394 239h25M430 239h1M466 239h1M12 240h1M48 240h1M60 240h1M84 240h1M394 240h1M418 240h1M430 240h1M466 240h1M12 241h1M48 241h1M60 241h1M84 241h1M394 241h1M418 241h1M430 241h1M466 241h1M12 242h1M48 242h1M60 242h1M84 242h1M394 242h1M418 242h1M430 242h1M466 242h1M12 243h1M48 243h1M60 243h1M84 243h1M394 243h1M418 243h1M430 243h1M466 243h1M12 244h1M48 244h1M60 244h1M84 244h1M394 244h1M418 244h1M430 244h1M466 244h1M12 245h1M48 245h1M60 245h1M84 245h1M394 245h1M418 245h1M430 245h1M466 245h1M12 246h1M48 246h13M84 246h1M394 246h1M418 246h1M430 246h1M466 246h1M12 247h1M48 247h1M60 247h1M84 247h1M394 247h1M418 247h20M466 247h1M12 248h1M48 248h1M60 248h1M84 248h1M394 248h1M418 248h1M430 248h1M438 248h18M466 248h1M12 249h1M48 249h1M60 249h1M84 249h1M394 249h1M418 249h1M430 249h1M456 249h11M12 250h1M48 250h1M60 250h1M84 250h1M394 250h1M418 250h1M430 250h1M466 250h1M12 251h1M48 251h1M60 251h1M84 251h1M394 251h1M418 251h1M430 251h1M466 251h1M12 252h1M48 252h1M60 252h1M85 252h1M393 252h1M418 252h1M430 252h1M466 252h1M12 253h1M49 253h1M61 253h1M85 253h1M393 253h1M417 253h1M429 253h1M466 253h1M12 254h1M49 254h1M61 254h1M85 254h1M393 254h1M417 254h1M429 254h1M466 254h1M13 255h1M49 255h1M61 255h1M85 255h1M393 255h1M417 255h1M429 255h1M465 255h1M13 256h1M49 256h1M61 256h1M85 256h1M393 256h1M417 256h1M429 256h1M465 256h1M13 257h1M49 257h1M61 257h1M85 257h1M393 257h1M417 257h1M429 257h1M465 257h1M13 258h1M49 258h1M61 258h1M85 258h1M393 258h1M417 258h1M429 258h1M465 258h1M13 259h1M49 259h1M61 259h1M85 259h1M393 259h1M417 259h1M429 259h1M465 259h1M13 260h1M49 260h1M61 260h1M85 260h1M393 260h1M417 260h1M429 260h1M465 260h1M13 261h1M49 261h1M59 261h3M86 261h1M392 261h1M417 261h1M429 261h1M465 261h1M13 262h1M49 262h1M53 262h6M61 262h1M86 262h1M392 262h1M417 262h1M429 262h1M465 262h1M13 263h1M50 263h3M62 263h1M86 263h1M392 263h1M416 263h6M428 263h1M465 263h1M13 264h1M50 264h1M62 264h1M86 264h1M392 264h1M416 264h1M422 264h7M465 264h1M13 265h1M50 265h1M62 265h1M86 265h1M392 265h1M416 265h1M428 265h1M465 265h1M14 266h1M50 266h1M62 266h1M86 266h1M392 266h1M416 266h1M428 266h1M464 266h1M14 267h1M50 267h1M62 267h1M87 267h1M391 267h1M416 267h1M428 267h1M464 267h1M14 268h1M50 268h1M62 268h1M87 268h1M391 268h1M416 268h1M428 268h1M464 268h1M14 269h1M50 269h1M63 269h1M87 269h1M391 269h1M415 269h1M428 269h1M464 269h1M14 270h1M51 270h1M63 270h1M87 270h1M391 270h1M415 270h1M427 270h1M464 270h1M14 271h1M51 271h1M63 271h1M87 271h1M391 271h1M415 271h1M427 271h1M464 271h1M14 272h1M51 272h1M63 272h1M88 272h1M390 272h1M415 272h1M427 272h1M464 272h1M15 273h1M51 273h1M63 273h1M88 273h1M390 273h1M415 273h1M427 273h1M463 273h1M15 274h1M51 274h1M63 274h1M88 274h1M390 274h1M415 274h1M427 274h1M463 274h1M15 275h1M51 275h1M64 275h1M88 275h1M390 275h1M414 275h1M427 275h1M463 275h1M15 276h1M52 276h1M64 276h1M88 276h1M390 276h1M414 276h1M426 276h1M463 276h1M15 277h1M52 277h1M61 277h4M89 277h1M389 277h1M414 277h1M426 277h1M463 277h1M15 278h1M52 278h1M56 278h5M64 278h1M89 278h1M389 278h1M414 278h3M426 278h1M463 278h1M16 279h1M52 279h4M65 279h1M89 279h1M389 279h1M413 279h1M417 279h5M426 279h1M462 279h1M16 280h1M52 280h1M65 280h1M90 280h1M388 280h1M413 280h1M422 280h3M426 280h1M462 280h1M16 281h1M53 281h1M65 281h1M90 281h1M388 281h1M413 281h1M425 281h1M462 281h1M16 282h1M53 282h1M65 282h1M90 282h1M388 282h1M413 282h1M425 282h1M462 282h1M16 283h1M53 283h1M65 283h1M90 283h1M388 283h1M413 283h1M425 283h1M462 283h1M17 284h1M53 284h1M66 284h1M91 284h1M387 284h1M412 284h1M425 284h1M461 284h1M17 285h1M54 285h1M66 285h1M91 285h1M365 285h1M387 285h1M412 285h1M424 285h1M461 285h1M17 286h1M54 286h1M66 286h1M91 286h1M123 286h2M364 286h1M387 286h1M412 286h1M424 286h1M461 286h1M17 287h1M54 287h1M67 287h1M92 287h1M120 287h3M363 287h1M386 287h1M411 287h1M424 287h1M461 287h1M17 288h1M54 288h1M67 288h1M92 288h1M117 288h3M362 288h1M386 288h1M411 288h1M424 288h1M461 288h1M18 289h1M55 289h1M67 289h1M92 289h1M115 289h2M360 289h2M386 289h1M411 289h1M423 289h1M460 289h1M18 290h1M55 290h1M67 290h1M93 290h1M359 290h1M385 290h1M411 290h1M423 290h1M460 290h1M18 291h1M55 291h1M68 291h1M93 291h1M358 291h1M385 291h1M410 291h1M423 291h1M460 291h1M18 292h1M56 292h1M66 292h3M93 292h1M357 292h1M385 292h1M410 292h1M422 292h1M460 292h1M19 293h1M56 293h1M63 293h3M68 293h1M94 293h1M356 293h1M384 293h1M410 293h2M422 293h1M459 293h1M19 294h1M56 294h1M60 294h3M69 294h1M94 294h1M355 294h1M384 294h1M409 294h1M412 294h3M422 294h1M459 294h1M19 295h1M56 295h1M58 295h2M69 295h1M94 295h1M354 295h1M384 295h1M409 295h1M415 295h4M422 295h1M459 295h1M19 296h1M57 296h1M69 296h1M95 296h1M352 296h2M383 296h1M409 296h1M419 296h3M459 296h1M20 297h1M57 297h1M70 297h1M95 297h1M351 297h1M383 297h1M408 297h1M421 297h1M458 297h1M20 298h1M57 298h1M70 298h1M96 298h1M350 298h1M382 298h1M408 298h1M421 298h1M458 298h1M20 299h1M58 299h1M70 299h1M96 299h1M349 299h1M382 299h1M408 299h1M420 299h1M458 299h1M20 300h1M58 300h1M71 300h1M97 300h1M348 300h1M382 300h1M407 300h1M420 300h1M458 300h1M21 301h1M58 301h1M71 301h1M97 301h1M347 301h12M381 301h1M383 301h2M407 301h1M420 301h1M457 301h1M21 302h1M59 302h1M71 302h1M97 302h1M381 302h1M385 302h2M407 302h1M419 302h1M457 302h1M21 303h1M59 303h1M72 303h1M98 303h1M380 303h1M387 303h2M406 303h1M419 303h1M457 303h1M22 304h1M59 304h1M72 304h1M98 304h1M345 304h1M380 304h1M389 304h2M406 304h1M419 304h1M456 304h1M22 305h1M60 305h1M73 305h1M99 305h1M345 305h1M379 305h1M391 305h3M405 305h1M418 305h1M456 305h1M22 306h1M60 306h1M73 306h1M99 306h1M346 306h1M379 306h1M394 306h2M405 306h1M418 306h1M456 306h1M22 307h1M61 307h1M72 307h2M100 307h1M346 307h1M378 307h1M396 307h2M405 307h1M417 307h1M456 307h1M23 308h1M61 308h1M70 308h2M74 308h1M100 308h1M346 308h1M378 308h1M398 308h2M404 308h3M417 308h1M455 308h1M23 309h1M61 309h1M67 309h3M74 309h1M101 309h1M346 309h1M377 309h1M400 309h2M404 309h1M407 309h2M417 309h1M455 309h1M23 310h1M62 310h1M65 310h2M75 310h1M101 310h1M347 310h1M377 310h1M402 310h2M409 310h2M416 310h1M455 310h1M24 311h1M62 311h3M75 311h1M102 311h1M347 311h1M376 311h1M403 311h1M411 311h2M416 311h1M454 311h1M24 312h1M63 312h1M76 312h1M102 312h1M347 312h1M376 312h1M402 312h1M413 312h3M454 312h1M24 313h1M63 313h1M76 313h1M347 313h1M375 313h1M402 313h1M415 313h1M454 313h1M25 314h1M63 314h1M76 314h1M101 314h3M348 314h1M375 314h1M402 314h1M415 314h1M453 314h1M25 315h1M64 315h1M77 315h1M99 315h2M104 315h1M348 315h1M374 315h1M401 315h1M414 315h1M453 315h1M25 316h1M64 316h1M77 316h1M97 316h2M104 316h1M348 316h1M374 316h1M401 316h1M414 316h1M453 316h1M26 317h1M65 317h1M78 317h1M95 317h2M105 317h1M373 317h1M400 317h1M413 317h1M452 317h1M26 318h1M65 318h1M78 318h1M93 318h2M106 318h1M372 318h1M400 318h1M413 318h1M452 318h1M27 319h1M66 319h1M79 319h1M91 319h2M106 319h1M372 319h1M399 319h1M412 319h1M451 319h1M27 320h1M66 320h1M79 320h1M89 320h2M107 320h1M371 320h1M399 320h1M412 320h1M451 320h1M27 321h1M66 321h1M79 321h2M87 321h2M107 321h1M371 321h1M398 321h1M412 321h1M451 321h1M28 322h1M67 322h1M77 322h2M80 322h1M85 322h2M108 322h1M370 322h1M398 322h1M411 322h1M450 322h1M28 323h1M67 323h1M75 323h2M81 323h1M83 323h2M109 323h1M369 323h1M397 323h1M399 323h2M411 323h1M450 323h1M29 324h1M68 324h1M73 324h2M81 324h2M109 324h1M369 324h1M397 324h1M401 324h2M410 324h1M449 324h1M29 325h1M68 325h1M71 325h2M82 325h1M110 325h1M328 325h1M368 325h1M396 325h1M403 325h2M410 325h1M449 325h1M29 326h1M69 326h2M83 326h1M111 326h1M329 326h2M367 326h1M395 326h1M405 326h2M409 326h1M449 326h1M30 327h1M68 327h2M83 327h1M111 327h1M331 327h2M367 327h1M395 327h1M407 327h1M409 327h1M448 327h1M30 328h1M66 328h2M70 328h1M84 328h1M112 328h1M333 328h2M366 328h1M394 328h1M408 328h1M448 328h1M31 329h1M64 329h2M71 329h1M84 329h1M113 329h1M335 329h2M365 329h1M394 329h1M407 329h1M447 329h1M31 330h1M62 330h2M71 330h1M85 330h1M114 330h1M337 330h1M364 330h1M393 330h1M407 330h1M447 330h1M31 331h1M60 331h2M72 331h1M85 331h1M114 331h1M364 331h1M393 331h1M406 331h1M447 331h1M32 332h1M58 332h2M72 332h1M86 332h1M115 332h1M363 332h1M392 332h1M406 332h1M446 332h1M32 333h1M56 333h2M73 333h1M87 333h1M116 333h1M362 333h1M391 333h1M405 333h1M446 333h1M33 334h1M55 334h1M73 334h1M87 334h1M117 334h1M361 334h1M391 334h1M405 334h1M445 334h1M33 335h1M53 335h2M74 335h1M87 335h2M117 335h1M361 335h1M390 335h1M404 335h1M445 335h1M34 336h1M51 336h2M74 336h1M85 336h2M89 336h1M118 336h1M360 336h1M389 336h2M404 336h1M444 336h1M34 337h1M49 337h2M75 337h1M83 337h2M89 337h1M119 337h1M359 337h1M389 337h1M391 337h2M403 337h1M444 337h1M35 338h1M47 338h2M76 338h1M81 338h2M90 338h1M120 338h1M358 338h1M388 338h1M393 338h2M402 338h1M443 338h1M35 339h1M45 339h2M76 339h1M79 339h2M91 339h1M121 339h1M357 339h1M387 339h1M395 339h2M402 339h1M443 339h1M36 340h1M43 340h2M77 340h2M91 340h1M121 340h1M357 340h1M387 340h1M397 340h2M401 340h1M442 340h1M36 341h1M41 341h2M78 341h1M92 341h1M122 341h1M356 341h1M386 341h1M399 341h2M442 341h1M37 342h1M39 342h2M78 342h1M93 342h1M123 342h1M355 342h1M385 342h1M399 342h2M441 342h1M37 343h2M79 343h1M93 343h1M124 343h1M354 343h1M385 343h1M399 343h3M441 343h1M38 344h1M79 344h1M94 344h1M125 344h1M306 344h1M353 344h1M384 344h1M399 344h1M402 344h2M440 344h1M38 345h1M80 345h1M95 345h1M126 345h1M306 345h1M352 345h1M383 345h1M398 345h1M404 345h1M440 345h1M39 346h1M81 346h1M96 346h1M127 346h1M307 346h1M351 346h1M382 346h1M397 346h1M405 346h2M439 346h1M39 347h1M81 347h1M96 347h1M128 347h1M307 347h1M350 347h1M382 347h1M397 347h1M407 347h1M439 347h1M40 348h1M82 348h1M96 348h2M129 348h1M308 348h1M349 348h1M381 348h1M396 348h1M408 348h2M438 348h1M40 349h1M83 349h1M95 349h1M98 349h1M130 349h1M308 349h1M348 349h1M380 349h2M395 349h1M410 349h2M438 349h1M41 350h1M84 350h1M93 350h2M99 350h1M131 350h1M309 350h1M347 350h1M379 350h1M382 350h1M394 350h1M412 350h1M437 350h1M42 351h1M84 351h1M92 351h1M99 351h1M132 351h1M309 351h1M346 351h1M379 351h1M383 351h2M394 351h1M413 351h2M436 351h1M42 352h1M85 352h1M91 352h1M100 352h1M133 352h1M310 352h1M345 352h1M378 352h1M385 352h1M393 352h1M415 352h2M436 352h1M43 353h1M86 353h1M89 353h2M101 353h1M134 353h1M310 353h1M344 353h1M377 353h1M386 353h1M392 353h1M417 353h1M435 353h1M43 354h1M87 354h2M102 354h1M135 354h1M343 354h1M376 354h1M387 354h2M391 354h1M418 354h2M435 354h1M44 355h1M87 355h1M103 355h1M136 355h1M342 355h1M375 355h1M389 355h1M391 355h1M420 355h2M434 355h1M44 356h1M88 356h1M104 356h1M137 356h1M341 356h1M374 356h1M390 356h1M422 356h1M434 356h1M45 357h1M89 357h1M104 357h1M138 357h2M339 357h2M374 357h1M389 357h1M423 357h2M433 357h1M46 358h1M90 358h1M105 358h1M140 358h1M338 358h1M373 358h1M388 358h1M425 358h1M432 358h1M46 359h1M90 359h1M106 359h1M141 359h1M337 359h1M372 359h1M388 359h1M426 359h2M432 359h1M47 360h1M91 360h1M106 360h2M142 360h1M335 360h2M371 360h1M387 360h1M428 360h2M431 360h1M48 361h1M92 361h1M105 361h1M108 361h1M143 361h2M334 361h3M370 361h2M386 361h1M430 361h1M48 362h1M93 362h1M104 362h1M109 362h1M145 362h1M333 362h1M336 362h1M369 362h1M372 362h1M385 362h1M430 362h1M49 363h1M94 363h1M103 363h1M110 363h1M146 363h1M243 363h1M332 363h1M337 363h1M368 363h1M373 363h1M384 363h1M429 363h1M50 364h1M95 364h1M102 364h1M111 364h1M147 364h2M243 364h1M330 364h2M338 364h1M367 364h1M374 364h1M383 364h1M428 364h1M50 365h1M95 365h1M101 365h1M112 365h1M149 365h1M243 365h1M329 365h1M339 365h1M366 365h1M375 365h2M383 365h1M428 365h1M51 366h1M96 366h1M100 366h1M113 366h1M150 366h1M243 366h1M328 366h1M339 366h1M365 366h1M377 366h1M382 366h1M427 366h1M52 367h1M97 367h1M99 367h1M114 367h1M151 367h2M243 367h1M326 367h2M340 367h1M364 367h1M378 367h1M381 367h1M426 367h1M52 368h1M98 368h1M115 368h1M153 368h1M243 368h1M325 368h1M341 368h1M363 368h1M379 368h2M426 368h1M53 369h1M99 369h1M116 369h1M154 369h2M243 369h1M323 369h2M342 369h1M362 369h1M379 369h1M425 369h1M54 370h1M100 370h1M117 370h1M156 370h1M243 370h1M322 370h1M342 370h1M361 370h1M378 370h1M424 370h1M54 371h1M101 371h1M117 371h2M157 371h2M243 371h1M320 371h2M343 371h1M360 371h1M377 371h1M424 371h1M55 372h1M102 372h1M116 372h1M119 372h1M159 372h2M243 372h1M318 372h2M344 372h1M359 372h2M376 372h1M423 372h1M56 373h1M103 373h1M115 373h1M120 373h1M161 373h1M243 373h1M317 373h1M345 373h1M358 373h1M361 373h1M375 373h1M422 373h1M57 374h1M104 374h1M114 374h1M121 374h2M162 374h3M315 374h2M345 374h1M356 374h2M362 374h1M374 374h1M421 374h1M57 375h1M105 375h1M114 375h1M123 375h1M163 375h3M313 375h2M346 375h1M355 375h1M363 375h1M373 375h1M421 375h1M58 376h1M106 376h1M113 376h1M124 376h1M163 376h1M166 376h2M311 376h2M347 376h1M354 376h1M364 376h1M372 376h1M420 376h1M59 377h1M107 377h1M112 377h1M125 377h1M162 377h1M168 377h2M309 377h2M348 377h1M353 377h1M365 377h1M371 377h1M419 377h1M60 378h1M108 378h1M111 378h1M126 378h1M162 378h1M170 378h2M307 378h2M348 378h1M352 378h1M366 378h1M370 378h1M418 378h1M60 379h1M109 379h2M127 379h2M161 379h1M172 379h2M305 379h2M349 379h3M367 379h1M369 379h1M418 379h1M61 380h1M110 380h1M129 380h1M161 380h1M174 380h2M303 380h2M349 380h1M368 380h1M417 380h1M62 381h1M111 381h1M129 381h2M160 381h1M176 381h3M300 381h3M348 381h1M367 381h1M416 381h1M63 382h1M112 382h1M128 382h1M131 382h2M159 382h1M179 382h2M298 382h2M346 382h3M366 382h1M415 382h1M64 383h1M113 383h2M128 383h1M133 383h1M159 383h1M181 383h2M296 383h2M345 383h1M349 383h1M364 383h2M414 383h1M64 384h1M115 384h1M127 384h1M134 384h1M158 384h1M183 384h3M293 384h3M344 384h1M350 384h1M363 384h1M414 384h1M65 385h1M116 385h1M126 385h1M135 385h2M158 385h1M186 385h3M290 385h3M342 385h2M350 385h1M362 385h1M413 385h1M66 386h1M117 386h1M125 386h1M137 386h1M157 386h1M189 386h3M287 386h3M341 386h1M351 386h1M361 386h1M412 386h1M67 387h1M118 387h1M125 387h1M138 387h2M157 387h1M192 387h3M284 387h3M339 387h2M352 387h1M360 387h1M411 387h1M68 388h1M119 388h2M124 388h1M140 388h1M156 388h1M195 388h4M280 388h4M338 388h1M353 388h1M358 388h2M410 388h1M69 389h1M121 389h1M123 389h1M141 389h2M155 389h1M199 389h3M277 389h3M336 389h2M353 389h1M357 389h1M409 389h1M70 390h1M122 390h1M142 390h2M155 390h1M202 390h5M272 390h5M335 390h1M354 390h1M356 390h1M408 390h1M70 391h1M123 391h2M141 391h1M144 391h2M154 391h1M207 391h5M267 391h5M333 391h3M354 391h2M408 391h1M71 392h1M125 392h1M141 392h1M146 392h1M154 392h1M212 392h6M261 392h6M332 392h1M336 392h1M353 392h1M407 392h1M72 393h1M126 393h1M140 393h1M147 393h2M153 393h1M218 393h9M252 393h9M330 393h2M336 393h1M352 393h1M406 393h1M73 394h1M127 394h2M140 394h1M149 394h2M153 394h1M227 394h25M253 394h1M328 394h2M337 394h1M350 394h2M405 394h1M74 395h1M129 395h1M139 395h1M151 395h2M253 395h1M326 395h2M337 395h1M349 395h1M404 395h1M75 396h1M130 396h1M139 396h1M153 396h1M253 396h1M325 396h1M338 396h1M348 396h1M403 396h1M76 397h1M131 397h2M138 397h1M154 397h2M253 397h1M323 397h2M338 397h1M346 397h2M402 397h1M77 398h1M133 398h1M138 398h1M156 398h2M253 398h1M321 398h2M339 398h1M345 398h1M401 398h1M78 399h1M134 399h4M155 399h1M158 399h2M254 399h1M319 399h3M339 399h1M343 399h2M400 399h1M79 400h1M135 400h3M155 400h1M160 400h2M254 400h1M317 400h2M322 400h1M340 400h3M399 400h1M80 401h1M135 401h1M138 401h1M154 401h1M162 401h2M254 401h1M315 401h2M322 401h1M340 401h1M398 401h1M81 402h1M134 402h1M139 402h2M154 402h1M164 402h3M254 402h1M312 402h3M323 402h1M338 402h2M397 402h1M82 403h1M134 403h1M141 403h1M153 403h1M167 403h2M254 403h1M310 403h2M323 403h1M337 403h1M396 403h1M83 404h1M133 404h1M142 404h2M153 404h1M169 404h2M254 404h1M308 404h2M324 404h1M335 404h2M395 404h1M84 405h1M132 405h1M144 405h2M152 405h1M170 405h4M254 405h1M305 405h3M324 405h1M333 405h2M394 405h1M85 406h1M132 406h1M146 406h2M152 406h1M170 406h1M174 406h2M254 406h1M303 406h2M307 406h1M325 406h1M331 406h2M393 406h1M86 407h1M131 407h1M148 407h2M151 407h1M169 407h1M176 407h3M254 407h1M300 407h3M308 407h1M325 407h1M329 407h2M392 407h1M87 408h2M130 408h1M150 408h1M169 408h1M179 408h3M254 408h1M297 408h3M308 408h1M326 408h1M328 408h1M390 408h2M89 409h1M130 409h1M151 409h2M168 409h1M182 409h3M254 409h1M294 409h3M309 409h1M326 409h2M389 409h1M90 410h1M129 410h1M153 410h2M168 410h1M185 410h3M254 410h1M291 410h3M309 410h1M324 410h2M327 410h1M388 410h1M91 411h1M129 411h1M155 411h2M167 411h1M185 411h1M188 411h4M255 411h1M287 411h4M292 411h1M309 411h1M322 411h2M328 411h1M387 411h1M92 412h1M128 412h1M157 412h3M167 412h1M184 412h1M192 412h3M255 412h1M284 412h3M292 412h1M310 412h1M319 412h3M328 412h1M386 412h1M93 413h1M127 413h1M160 413h2M166 413h1M184 413h1M195 413h5M255 413h1M279 413h5M293 413h1M310 413h1M317 413h2M329 413h1M385 413h1M94 414h2M127 414h1M162 414h2M166 414h1M184 414h1M200 414h4M255 414h1M275 414h4M293 414h1M311 414h1M315 414h2M329 414h1M383 414h2M96 415h1M126 415h1M164 415h3M184 415h1M200 415h1M204 415h6M255 415h1M269 415h6M277 415h1M293 415h1M311 415h4M330 415h1M382 415h1M97 416h1M126 416h1M167 416h2M183 416h1M200 416h1M210 416h6M255 416h1M263 416h6M277 416h1M294 416h1M310 416h2M330 416h1M381 416h1M98 417h1M125 417h1M169 417h3M183 417h1M199 417h1M215 417h11M253 417h10M277 417h1M294 417h1M307 417h3M331 417h1M380 417h1M99 418h2M124 418h1M172 418h2M183 418h1M199 418h1M215 418h1M226 418h27M261 418h1M278 418h1M294 418h1M305 418h2M331 418h1M378 418h2M101 419h1M124 419h1M174 419h3M182 419h1M199 419h1M215 419h1M231 419h1M246 419h1M261 419h1M278 419h1M295 419h1M302 419h3M332 419h1M377 419h1M102 420h1M123 420h1M177 420h3M182 420h1M199 420h1M215 420h1M231 420h1M246 420h1M262 420h1M278 420h1M295 420h1M299 420h3M332 420h1M376 420h1M103 421h2M123 421h1M180 421h3M199 421h1M215 421h1M231 421h1M246 421h1M262 421h1M278 421h1M296 421h3M333 421h1M374 421h2M105 422h1M122 422h1M183 422h4M198 422h1M215 422h1M231 422h1M246 422h1M262 422h1M278 422h1M292 422h4M333 422h1M373 422h1M106 423h1M121 423h1M187 423h3M198 423h1M214 423h1M231 423h1M246 423h1M262 423h1M279 423h1M289 423h3M334 423h1M372 423h1M107 424h2M121 424h1M190 424h4M198 424h1M214 424h1M231 424h1M246 424h1M262 424h1M279 424h1M285 424h4M335 424h1M370 424h2M109 425h1M120 425h1M194 425h4M214 425h1M231 425h1M246 425h1M262 425h1M279 425h1M281 425h4M335 425h1M369 425h1M110 426h2M119 426h1M198 426h5M214 426h1M231 426h1M246 426h1M263 426h1M276 426h5M336 426h1M367 426h2M112 427h1M119 427h1M203 427h6M214 427h1M231 427h1M246 427h1M263 427h1M270 427h6M336 427h1M366 427h1M113 428h2M118 428h1M209 428h7M231 428h1M246 428h1M263 428h7M337 428h1M364 428h2M115 429h1M118 429h1M216 429h10M231 429h1M246 429h1M253 429h10M337 429h1M363 429h1M116 430h2M226 430h27M338 430h1M361 430h2M118 431h1M231 431h1M338 431h1M360 431h1M119 432h2M231 432h1M339 432h1M358 432h2M121 433h1M231 433h1M339 433h1M357 433h1M122 434h2M231 434h1M340 434h1M355 434h2M124 435h2M231 435h1M340 435h1M353 435h2M126 436h2M231 436h1M341 436h1M351 436h2M128 437h1M231 437h1M341 437h1M350 437h1M129 438h2M231 438h1M342 438h1M348 438h2M131 439h2M230 439h1M342 439h1M346 439h2M133 440h2M230 440h1M343 440h3M135 441h2M230 441h1M342 441h2M137 442h2M230 442h1M340 442h2M139 443h2M230 443h1M338 443h2M141 444h2M230 444h1M336 444h2M143 445h2M230 445h1M334 445h2M145 446h2M230 446h1M332 446h2M147 447h3M230 447h1M329 447h3M150 448h2M230 448h1M327 448h2M152 449h3M230 449h1M324 449h3M155 450h2M230 450h1M322 450h2M157 451h3M230 451h1M319 451h3M160 452h2M230 452h1M317 452h2M162 453h3M230 453h1M314 453h3M165 454h3M230 454h1M311 454h3M168 455h3M230 455h1M308 455h3M171 456h4M230 456h1M304 456h4M175 457h3M229 457h1M301 457h3M178 458h4M229 458h1M297 458h4M182 459h4M229 459h1M293 459h4M186 460h4M229 460h1M289 460h4M190 461h5M229 461h1M284 461h5M195 462h5M229 462h1M279 462h5M200 463h6M229 463h1M273 463h6M206 464h7M229 464h1M266 464h7M213 465h11M229 465h1M255 465h11M224 466h31"/>
<path stroke="#808080" d="M229 49h1M235 49h1M239 49h1M241 49h1M244 49h1M251 49h1M219 50h1M222 50h1M225 50h1M229 50h1M235 50h1M239 50h1M241 50h1M244 50h1M251 50h1M254 50h1M257 50h1M261 50h1M209 51h1M212 51h1M219 51h1M222 51h1M225 51h1M229 51h1M235 51h1M239 51h1M241 51h1M244 51h1M251 51h1M254 51h1M257 51h1M261 51h1M267 51h1M205 52h1M209 52h1M212 52h1M219 52h1M222 52h1M225 52h1M229 52h1M235 52h1M239 52h1M241 52h1M244 52h1M251 52h1M254 52h1M257 52h1M261 52h1M267 52h1M271 52h1M274 52h1M202 53h1M205 53h1M209 53h1M212 53h1M219 53h1M222 53h1M225 53h1M229 53h1M235 53h1M239 53h1M241 53h1M244 53h1M251 53h1M254 53h1M257 53h1M261 53h1M267 53h1M271 53h1M274 53h1M277 53h1M196 54h1M202 54h1M205 54h1M209 54h1M212 54h1M219 54h1M222 54h1M225 54h1M229 54h1M235 54h1M239 54h1M241 54h1M244 54h1M251 54h1M254 54h1M257 54h1M261 54h1M267 54h1M271 54h1M274 54h1M277 54h1M284 54h1M192 55h1M196 55h1M202 55h1M206 55h1M209 55h1M212 55h1M220 55h1M223 55h1M226 55h1M229 55h1M235 55h1M239 55h1M241 55h1M244 55h1M250 55h1M254 55h1M257 55h1M261 55h1M267 55h1M270 55h1M273 55h1M277 55h1M284 55h1M287 55h1M189 56h1M192 56h1M196 56h1M203 56h1M206 56h1M209 56h1M213 56h1M220 56h1M223 56h1M226 56h1M229 56h1M235 56h1M239 56h1M241 56h1M244 56h1M250 56h1M253 56h1M256 56h1M260 56h1M267 56h1M270 56h1M273 56h1M276 56h1M283 56h1M287 56h1M290 56h1M186 57h1M189 57h1M193 57h1M197 57h1M203 57h1M206 57h1M210 57h1M213 57h1M220 57h1M223 57h1M226 57h1M229 57h1M235 57h1M239 57h1M241 57h1M244 57h1M250 57h1M253 57h1M256 57h1M260 57h1M266 57h1M270 57h1M273 57h1M276 57h1M283 57h1M286 57h1M290 57h1M293 57h1M186 58h1M190 58h1M193 58h1M197 58h1M203 58h1M206 58h1M210 58h1M213 58h1M220 58h1M223 58h1M226 58h1M229 58h1M235 58h1M239 58h1M241 58h1M244 58h1M250 58h1M253 58h1M256 58h1M260 58h1M266 58h1M270 58h1M273 58h1M276 58h1M283 58h1M286 58h1M289 58h1M293 58h1M180 59h1M187 59h1M190 59h1M193 59h1M197 59h1M203 59h1M206 59h1M210 59h1M213 59h1M220 59h1M223 59h1M226 59h1M229 59h1M235 59h1M239 59h1M241 59h1M244 59h1M250 59h1M253 59h1M256 59h1M260 59h1M266 59h1M270 59h1M273 59h1M276 59h1M283 59h1M286 59h1M289 59h1M292 59h1M300 59h1M177 60h1M180 60h1M187 60h1M190 60h1M194 60h1M197 60h1M203 60h1M207 60h1M210 60h1M213 60h1M220 60h1M223 60h1M253 60h1M256 60h1M260 60h1M266 60h1M269 60h1M272 60h1M276 60h1M282 60h1M286 60h1M289 60h1M292 60h1M300 60h1M303 60h1M173 61h1M177 61h1M181 61h1M187 61h1M191 61h1M194 61h1M197 61h1M204 61h1M207 61h1M210 61h1M213 61h1M266 61h1M269 61h1M272 61h1M275 61h1M282 61h1M285 61h1M289 61h1M292 61h1M299 61h1M303 61h1M306 61h1M170 62h1M173 62h1M178 62h1M181 62h1M188 62h1M191 62h1M194 62h1M198 62h1M204 62h1M207 62h1M269 62h1M272 62h1M275 62h1M282 62h1M285 62h1M288 62h1M292 62h1M299 62h1M302 62h1M306 62h1M309 62h1M170 63h1M174 63h1M178 63h1M181 63h1M188 63h1M191 63h1M194 63h1M198 63h1M275 63h1M281 63h1M285 63h1M288 63h1M291 63h1M298 63h1M302 63h1M305 63h1M309 63h1M164 64h1M171 64h1M174 64h1M178 64h1M182 64h1M188 64h1M191 64h1M195 64h1M198 64h1M281 64h1M284 64h1M288 64h1M291 64h1M298 64h1M301 64h1M305 64h1M308 64h1M164 65h1M171 65h1M175 65h1M179 65h1M182 65h1M189 65h1M192 65h1M284 65h1M287 65h1M291 65h1M298 65h1M301 65h1M304 65h1M308 65h1M315 65h1M161 66h1M165 66h1M172 66h1M175 66h1M179 66h1M182 66h1M189 66h1M287 66h1M290 66h1M297 66h1M301 66h1M304 66h1M307 66h1M315 66h1M318 66h1M158 67h1M161 67h1M165 67h1M172 67h1M176 67h1M179 67h1M183 67h1M297 67h1M300 67h1M304 67h1M307 67h1M314 67h1M318 67h1M158 68h1M162 68h1M166 68h1M172 68h1M176 68h1M180 68h1M183 68h1M296 68h1M300 68h1M303 68h1M307 68h1M314 68h1M317 68h1M321 68h1M155 69h1M159 69h1M162 69h1M166 69h1M173 69h1M177 69h1M180 69h1M299 69h1M303 69h1M306 69h1M313 69h1M317 69h1M321 69h1M324 69h1M156 70h1M159 70h1M163 70h1M166 70h1M173 70h1M177 70h1M302 70h1M306 70h1M313 70h1M316 70h1M320 70h1M324 70h1M156 71h1M160 71h1M163 71h1M167 71h1M174 71h1M305 71h1M312 71h1M316 71h1M320 71h1M323 71h1M149 72h1M157 72h1M160 72h1M164 72h1M167 72h1M305 72h1M312 72h1M316 72h1M319 72h1M323 72h1M330 72h1M146 73h1M150 73h1M157 73h1M161 73h1M164 73h1M168 73h1M311 73h1M315 73h1M319 73h1M322 73h1M329 73h1M147 74h1M150 74h1M158 74h1M161 74h1M165 74h1M168 74h1M311 74h1M315 74h1M318 74h1M322 74h1M329 74h1M333 74h1M143 75h1M147 75h1M151 75h1M158 75h1M162 75h1M165 75h1M314 75h1M318 75h1M321 75h1M328 75h1M332 75h1M144 76h1M148 76h1M151 76h1M159 76h1M162 76h1M317 76h1M321 76h1M328 76h1M332 76h1M336 76h1M140 77h1M144 77h1M148 77h1M152 77h1M159 77h1M317 77h1M320 77h1M327 77h1M331 77h1M335 77h1M339 77h1M141 78h1M145 78h1M149 78h1M152 78h1M320 78h1M327 78h1M331 78h1M335 78h1M338 78h1M142 79h1M146 79h1M149 79h1M153 79h1M326 79h1M330 79h1M334 79h1M338 79h1M135 80h1M142 80h1M146 80h1M150 80h1M153 80h1M326 80h1M330 80h1M334 80h1M337 80h1M136 81h1M143 81h1M147 81h1M150 81h1M325 81h1M329 81h1M333 81h1M336 81h1M344 81h1M132 82h1M136 82h1M144 82h1M148 82h1M151 82h1M329 82h1M332 82h1M336 82h1M343 82h1M133 83h1M137 83h1M145 83h1M148 83h1M328 83h1M332 83h1M335 83h1M343 83h1M347 83h1M129 84h1M133 84h1M138 84h1M145 84h1M331 84h1M334 84h1M342 84h1M346 84h1M130 85h1M134 85h1M138 85h1M146 85h1M334 85h1M342 85h1M346 85h1M350 85h1M127 86h1M131 86h1M135 86h1M139 86h1M333 86h1M341 86h1M345 86h1M349 86h1M128 87h1M131 87h1M135 87h1M140 87h1M340 87h1M344 87h1M349 87h1M352 87h1M129 88h1M132 88h1M136 88h1M140 88h1M340 88h1M343 88h1M348 88h1M351 88h1M129 89h1M133 89h1M137 89h1M339 89h1M343 89h1M347 89h1M351 89h1M121 90h1M130 90h1M134 90h1M137 90h1M342 90h1M346 90h1M350 90h1M122 91h1M131 91h1M134 91h1M341 91h1M346 91h1M349 91h1M358 91h1M119 92h1M123 92h1M132 92h1M135 92h1M345 92h1M348 92h1M357 92h1M120 93h1M124 93h1M132 93h1M344 93h1M348 93h1M356 93h1M360 93h1M116 94h1M121 94h1M125 94h1M133 94h1M347 94h1M355 94h1M359 94h1M117 95h1M121 95h1M125 95h1M346 95h1M355 95h1M359 95h1M363 95h1M114 96h1M118 96h1M122 96h1M126 96h1M354 96h1M358 96h1M362 96h1M115 97h1M119 97h1M123 97h1M127 97h1M353 97h1M357 97h1M361 97h1M365 97h1M116 98h1M120 98h1M124 98h1M128 98h1M352 98h1M356 98h1M360 98h1M364 98h1M117 99h1M120 99h1M124 99h1M356 99h1M360 99h1M363 99h1M118 100h1M121 100h1M125 100h1M355 100h1M359 100h1M362 100h1M109 101h1M118 101h1M122 101h1M354 101h1M358 101h1M362 101h1M110 102h1M119 102h1M123 102h1M357 102h1M361 102h1M370 102h1M106 103h1M111 103h1M120 103h1M356 103h1M360 103h1M369 103h1M107 104h1M112 104h1M359 104h1M368 104h1M373 104h1M104 105h1M108 105h1M113 105h1M313 105h1M367 105h1M372 105h1M105 106h1M109 106h1M114 106h1M366 106h1M371 106h1M375 106h1M106 107h1M110 107h2M115 107h1M312 107h1M365 107h1M370 107h1M374 107h1M102 108h1M107 108h1M112 108h1M116 108h1M364 108h1M368 108h2M373 108h1M103 109h1M108 109h1M113 109h1M311 109h1M363 109h1M367 109h1M372 109h1M377 109h1M104 110h1M108 110h1M114 110h1M366 110h1M372 110h1M376 110h1M105 111h1M109 111h1M279 111h1M310 111h1M365 111h1M371 111h1M375 111h1M106 112h1M110 112h1M279 112h1M370 112h1M374 112h1M97 113h1M107 113h1M111 113h1M278 113h1M309 113h1M369 113h1M373 113h1M98 114h1M108 114h1M278 114h1M368 114h1M372 114h1M382 114h1M95 115h1M99 115h1M109 115h1M278 115h1M308 115h1M371 115h1M381 115h1M96 116h1M100 116h1M277 116h1M370 116h1M380 116h1M384 116h1M97 117h1M101 117h2M277 117h1M307 117h1M379 117h1M383 117h1M93 118h1M98 118h1M103 118h1M277 118h1M377 118h2M382 118h1M94 119h1M99 119h2M104 119h1M144 119h1M276 119h1M306 119h1M376 119h1M381 119h1M386 119h1M91 120h1M95 120h2M101 120h1M276 120h1M375 120h1M379 120h2M385 120h1M92 121h1M97 121h1M102 121h1M145 121h1M305 121h1M378 121h1M383 121h2M388 121h1M93 122h1M98 122h1M103 122h1M377 122h1M382 122h1M387 122h1M94 123h1M99 123h2M147 123h1M303 123h1M376 123h1M381 123h1M386 123h1M95 124h2M101 124h1M379 124h2M385 124h1M97 125h1M149 125h1M302 125h1M378 125h1M383 125h2M87 126h1M98 126h1M382 126h1M88 127h1M150 127h1M301 127h1M381 127h1M392 127h1M85 128h1M89 128h2M380 128h1M391 128h1M86 129h1M91 129h1M152 129h1M300 129h1M389 129h2M394 129h1M87 130h2M92 130h1M388 130h1M393 130h1M83 131h1M89 131h1M93 131h2M153 131h1M299 131h1M387 131h1M391 131h2M84 132h1M90 132h1M95 132h1M385 132h2M390 132h1M396 132h1M85 133h2M91 133h2M155 133h1M298 133h1M384 133h1M389 133h1M394 133h2M81 134h1M87 134h1M93 134h1M387 134h2M393 134h1M82 135h2M88 135h1M156 135h1M297 135h1M386 135h1M391 135h2M398 135h1M84 136h1M89 136h2M390 136h1M396 136h2M85 137h2M91 137h1M158 137h1M296 137h1M388 137h2M395 137h1M87 138h2M393 138h2M77 139h1M89 139h1M160 139h1M295 139h1M392 139h1M78 140h2M390 140h2M401 140h1M80 141h1M161 141h1M293 141h1M400 141h1M76 142h1M81 142h2M398 142h2M77 143h2M83 143h1M163 143h1M292 143h1M397 143h1M403 143h1M79 144h1M84 144h2M396 144h1M401 144h2M74 145h1M80 145h2M86 145h1M164 145h1M291 145h1M394 145h2M400 145h1M75 146h2M82 146h2M393 146h1M398 146h2M405 146h1M77 147h2M84 147h1M166 147h1M290 147h1M397 147h1M403 147h2M72 148h1M79 148h2M395 148h2M401 148h2M73 149h2M81 149h2M168 149h1M289 149h1M399 149h2M406 149h1M75 150h2M83 150h1M397 150h2M404 150h2M77 151h2M169 151h1M288 151h1M396 151h1M402 151h2M79 152h2M400 152h2M81 153h1M171 153h1M287 153h1M398 153h2M69 154h2M71 155h2M172 155h1M286 155h1M409 155h1M73 156h2M407 156h2M68 157h2M75 157h2M174 157h1M285 157h1M405 157h2M70 158h2M77 158h2M403 158h2M410 158h2M72 159h2M176 159h1M283 159h1M401 159h2M408 159h2M66 160h2M74 160h2M406 160h2M68 161h2M76 161h2M177 161h1M282 161h1M404 161h2M411 161h2M70 162h3M402 162h2M409 162h2M65 163h2M73 163h2M179 163h1M407 163h2M67 164h2M75 164h1M405 164h2M413 164h2M69 165h2M180 165h1M280 165h1M375 165h1M403 165h2M411 165h2M71 166h2M373 166h1M408 166h3M73 167h2M182 167h1M279 167h1M371 167h1M406 167h2M369 168h1M404 168h2M62 169h2M183 169h1M278 169h1M367 169h1M64 170h2M365 170h1M415 170h2M66 171h3M185 171h1M277 171h1M413 171h2M61 172h2M69 172h2M363 172h1M410 172h3M63 173h2M71 173h2M187 173h1M276 173h1M361 173h1M408 173h2M416 173h2M65 174h3M359 174h1M407 174h1M414 174h2M60 175h2M68 175h2M188 175h1M275 175h1M357 175h1M412 175h2M62 176h2M70 176h1M355 176h1M410 176h2M64 177h3M190 177h1M273 177h1M353 177h1M408 177h2M417 177h2M59 178h2M67 178h2M97 178h1M351 178h1M414 178h3M61 179h2M69 179h1M99 179h1M191 179h1M272 179h1M349 179h1M411 179h3M63 180h3M101 180h1M347 180h1M409 180h2M418 180h2M66 181h2M103 181h1M105 181h1M193 181h1M271 181h1M345 181h1M415 181h3M68 182h1M107 182h1M343 182h1M412 182h3M109 183h1M195 183h1M270 183h1M410 183h2M111 184h1M341 184h1M57 185h2M113 185h1M196 185h1M269 185h1M339 185h1M59 186h3M115 186h1M337 186h1M420 186h2M62 187h4M117 187h1M119 187h1M198 187h1M268 187h1M335 187h1M417 187h3M56 188h2M66 188h1M121 188h1M333 188h1M414 188h3M58 189h3M123 189h1M199 189h1M267 189h1M331 189h1M412 189h2M421 189h2M61 190h4M125 190h1M329 190h1M418 190h3M55 191h2M65 191h2M127 191h1M201 191h1M266 191h1M327 191h1M414 191h4M57 192h3M129 192h1M325 192h1M413 192h1M422 192h2M60 193h4M131 193h1M133 193h1M203 193h1M265 193h1M323 193h1M419 193h3M54 194h2M64 194h2M135 194h1M321 194h1M415 194h4M56 195h3M137 195h1M204 195h1M263 195h1M319 195h1M414 195h1M59 196h4M139 196h1M422 196h3M63 197h2M141 197h1M206 197h1M262 197h1M317 197h1M417 197h5M143 198h1M315 198h1M414 198h3M145 199h1M147 199h1M207 199h1M261 199h1M313 199h1M149 200h1M311 200h1M53 201h3M151 201h1M209 201h1M260 201h1M309 201h1M56 202h5M153 202h1M307 202h1M423 202h3M61 203h3M155 203h1M210 203h1M259 203h1M305 203h1M418 203h5M52 204h3M157 204h1M303 204h1M416 204h2M55 205h5M159 205h1M161 205h1M212 205h1M258 205h1M301 205h1M424 205h3M60 206h3M163 206h1M299 206h1M419 206h5M52 207h3M165 207h1M214 207h1M257 207h1M297 207h1M416 207h3M55 208h5M167 208h1M60 209h3M169 209h1M215 209h1M256 209h1M295 209h1M422 209h6M171 210h1M293 210h1M417 210h5M51 211h5M173 211h1M217 211h1M255 211h1M56 212h6M175 212h1M177 212h1M289 212h1M423 212h5M179 213h1M218 213h1M253 213h1M287 213h1M417 213h6M181 214h1M285 214h1M183 215h1M220 215h1M252 215h1M283 215h1M185 216h1M281 216h1M50 217h5M187 217h1M222 217h1M251 217h1M279 217h1M55 218h6M189 218h1M191 218h1M277 218h1M193 219h1M223 219h1M250 219h1M275 219h1M424 219h5M195 220h1M418 220h6M50 221h5M197 221h1M225 221h1M249 221h1M55 222h6M199 222h1M424 222h5M201 223h1M226 223h1M248 223h1M269 223h1M418 223h6M50 224h5M203 224h1M205 224h1M267 224h1M55 225h6M207 225h1M228 225h1M247 225h1M265 225h1M424 225h5M209 226h1M263 226h1M419 226h5M49 227h6M211 227h1M229 227h1M246 227h1M261 227h1M55 228h5M213 228h1M259 228h1M215 229h1M231 229h1M245 229h1M257 229h1M419 229h11M217 230h1M219 230h1M255 230h1M221 231h1M233 231h1M243 231h1M253 231h1M223 232h1M251 232h1M225 233h1M234 233h1M242 233h1M49 234h11M227 234h1M249 234h1M229 235h1M236 235h1M247 235h1M419 235h11M231 236h1M233 236h1M245 236h1M49 237h11M237 237h1M240 237h1M243 237h1M237 238h1M241 238h1M49 239h11M239 239h1M419 239h11M237 240h1M241 240h1M235 241h1M238 241h1M241 241h1M243 241h1M419 241h11M233 242h1M245 242h1M247 242h1M49 243h11M231 243h1M237 243h1M242 243h1M249 243h1M229 244h1M251 244h1M419 244h11M236 245h1M244 245h1M253 245h1M227 246h1M255 246h1M225 247h1M235 247h1M245 247h1M257 247h1M223 248h1M259 248h1M261 248h1M49 249h11M221 249h1M233 249h1M247 249h1M263 249h1M219 250h1M265 250h1M419 250h5M217 251h1M232 251h1M249 251h1M267 251h1M424 251h6M55 252h5M215 252h1M269 252h1M50 253h5M213 253h1M231 253h1M250 253h1M271 253h1M418 253h5M211 254h1M273 254h1M275 254h1M423 254h6M56 255h5M209 255h1M230 255h1M252 255h1M277 255h1M50 256h6M207 256h1M279 256h1M418 256h5M229 257h1M253 257h1M281 257h1M423 257h6M56 258h5M205 258h1M283 258h1M50 259h6M203 259h1M228 259h1M255 259h1M285 259h1M201 260h1M287 260h1M289 260h1M418 260h5M199 261h1M227 261h1M256 261h1M291 261h1M423 261h6M197 262h1M293 262h1M195 263h1M226 263h1M258 263h1M295 263h1M193 264h1M297 264h1M57 265h5M191 265h1M225 265h1M260 265h1M299 265h1M51 266h6M189 266h1M301 266h1M417 266h5M187 267h1M223 267h1M261 267h1M305 267h1M422 267h6M57 268h5M185 268h1M307 268h1M51 269h6M183 269h1M222 269h1M263 269h1M309 269h1M416 269h3M311 270h1M419 270h5M60 271h3M181 271h1M221 271h1M264 271h1M313 271h1M424 271h3M55 272h5M179 272h1M315 272h1M416 272h3M52 273h3M177 273h1M220 273h1M266 273h1M317 273h1M319 273h1M419 273h5M61 274h2M175 274h1M321 274h1M424 274h3M56 275h5M173 275h1M219 275h1M268 275h1M323 275h1M415 275h3M53 276h3M171 276h1M325 276h1M418 276h5M169 277h1M218 277h1M269 277h1M327 277h1M423 277h3M167 278h1M329 278h1M165 279h1M217 279h1M271 279h1M331 279h1M333 279h1M62 280h3M163 280h1M335 280h1M57 281h5M161 281h1M216 281h1M272 281h1M337 281h1M414 281h2M54 282h3M339 282h1M416 282h3M64 283h1M159 283h1M215 283h1M274 283h1M341 283h1M419 283h4M61 284h3M343 284h1M413 284h2M423 284h2M57 285h4M155 285h1M213 285h1M275 285h1M345 285h1M347 285h1M415 285h3M55 286h2M65 286h1M349 286h1M418 286h4M62 287h3M151 287h1M212 287h1M277 287h1M351 287h1M412 287h2M422 287h2M58 288h4M149 288h1M353 288h1M414 288h3M56 289h2M65 289h2M147 289h1M211 289h1M279 289h1M355 289h1M417 289h4M62 290h3M145 290h1M357 290h1M412 290h1M421 290h2M59 291h3M143 291h1M210 291h1M280 291h1M359 291h1M361 291h1M413 291h3M57 292h2M141 292h1M363 292h1M416 292h4M139 293h1M209 293h1M282 293h1M365 293h1M420 293h2M367 294h1M67 295h2M137 295h1M208 295h1M283 295h1M369 295h1M64 296h3M135 296h1M371 296h1M410 296h1M61 297h3M133 297h1M207 297h1M285 297h1M373 297h1M375 297h1M411 297h2M59 298h2M68 298h2M131 298h1M377 298h1M413 298h3M65 299h3M129 299h1M206 299h1M287 299h1M379 299h1M409 299h1M416 299h2M62 300h3M127 300h1M381 300h1M410 300h2M418 300h2M60 301h2M69 301h2M125 301h1M205 301h1M288 301h1M412 301h3M67 302h2M123 302h1M408 302h1M415 302h2M65 303h2M121 303h1M203 303h1M290 303h1M409 303h2M417 303h2M63 304h2M71 304h1M119 304h1M411 304h3M61 305h2M69 305h2M117 305h1M202 305h1M291 305h1M406 305h2M414 305h2M66 306h3M115 306h1M408 306h2M416 306h2M64 307h2M201 307h1M293 307h1M410 307h3M62 308h2M113 308h1M413 308h2M111 309h1M200 309h1M295 309h1M415 309h2M73 310h2M109 310h1M71 311h2M107 311h1M199 311h1M296 311h1M404 311h2M68 312h3M105 312h1M406 312h2M66 313h2M74 313h2M103 313h1M198 313h1M298 313h1M408 313h2M64 314h2M72 314h2M403 314h1M410 314h2M70 315h2M197 315h1M299 315h1M404 315h2M412 315h2M68 316h2M75 316h2M406 316h3M66 317h2M73 317h2M196 317h1M301 317h1M401 317h2M409 317h2M71 318h2M403 318h2M411 318h2M69 319h2M76 319h2M195 319h1M302 319h1M405 319h2M67 320h2M74 320h2M400 320h2M407 320h2M72 321h2M193 321h1M304 321h1M402 321h2M409 321h2M70 322h2M404 322h2M69 323h1M192 323h1M306 323h1M406 323h2M408 324h2M79 325h2M191 325h1M307 325h1M397 325h1M77 326h2M398 326h2M75 327h2M82 327h1M190 327h1M309 327h1M400 327h2M73 328h2M80 328h2M395 328h1M402 328h2M72 329h1M78 329h2M189 329h1M310 329h1M396 329h2M404 329h2M76 330h2M82 330h2M398 330h2M406 330h1M74 331h2M81 331h1M188 331h1M312 331h1M323 331h1M394 331h1M400 331h2M73 332h1M79 332h2M85 332h1M323 332h1M395 332h2M402 332h2M78 333h1M84 333h1M187 333h1M314 333h1M323 333h1M392 333h1M397 333h1M404 333h1M76 334h2M82 334h2M323 334h1M393 334h2M398 334h2M75 335h1M81 335h1M186 335h1M315 335h1M323 335h1M395 335h1M400 335h2M80 336h1M323 336h1M396 336h2M402 336h1M78 337h2M185 337h1M317 337h1M324 337h1M398 337h1M77 338h1M87 338h2M324 338h1M399 338h2M86 339h1M183 339h1M318 339h1M324 339h1M389 339h1M401 339h1M84 340h2M324 340h1M390 340h2M83 341h1M89 341h2M182 341h1M320 341h1M324 341h1M387 341h1M392 341h1M81 342h2M88 342h1M324 342h1M388 342h1M393 342h2M80 343h1M86 343h2M92 343h1M181 343h1M322 343h1M324 343h1M389 343h2M395 343h2M85 344h1M91 344h1M385 344h1M391 344h1M397 344h1M83 345h2M89 345h2M94 345h1M180 345h1M323 345h1M386 345h1M392 345h1M82 346h1M88 346h1M93 346h1M383 346h1M387 346h2M393 346h2M87 347h1M91 347h2M179 347h1M325 347h1M384 347h1M389 347h1M395 347h1M85 348h2M90 348h1M385 348h2M390 348h1M84 349h1M89 349h1M178 349h1M387 349h1M391 349h2M87 350h2M98 350h1M388 350h1M393 350h1M86 351h1M97 351h1M177 351h1M328 351h1M389 351h2M96 352h1M380 352h1M391 352h1M95 353h1M100 353h1M176 353h1M329 353h1M381 353h1M93 354h2M99 354h1M377 354h1M382 354h1M92 355h1M97 355h2M102 355h1M175 355h1M331 355h1M378 355h1M383 355h2M91 356h1M96 356h1M101 356h1M375 356h1M379 356h2M385 356h1M90 357h1M95 357h1M100 357h1M173 357h1M333 357h1M376 357h1M381 357h1M386 357h1M93 358h2M99 358h1M103 358h1M377 358h1M382 358h1M387 358h1M92 359h1M97 359h2M102 359h1M172 359h1M334 359h1M374 359h1M378 359h1M383 359h2M96 360h1M101 360h1M375 360h1M379 360h2M385 360h1M95 361h1M99 361h2M171 361h1M376 361h1M381 361h1M94 362h1M98 362h1M108 362h1M377 362h2M382 362h1M97 363h1M107 363h1M170 363h1M369 363h1M379 363h1M383 363h1M96 364h1M106 364h1M110 364h1M370 364h1M380 364h1M105 365h1M109 365h1M169 365h1M367 365h1M371 365h1M381 365h1M104 366h1M108 366h1M368 366h1M372 366h1M103 367h1M107 367h1M113 367h1M168 367h1M369 367h1M373 367h1M102 368h1M107 368h1M112 368h1M364 368h1M370 368h1M374 368h1M101 369h1M106 369h1M111 369h1M115 369h1M167 369h1M365 369h1M371 369h1M375 369h1M105 370h1M110 370h1M114 370h1M362 370h1M366 370h1M371 370h1M376 370h1M104 371h1M108 371h2M113 371h1M166 371h1M363 371h1M367 371h1M372 371h1M103 372h1M107 372h1M112 372h1M364 372h1M368 372h2M373 372h1M106 373h1M111 373h1M165 373h1M365 373h1M370 373h1M374 373h1M105 374h1M110 374h1M119 374h1M366 374h1M371 374h1M109 375h1M118 375h1M122 375h1M358 375h1M367 375h1M372 375h1M108 376h1M117 376h1M121 376h1M355 376h1M359 376h1M368 376h1M117 377h1M120 377h1M124 377h1M356 377h1M360 377h1M369 377h1M116 378h1M119 378h1M123 378h1M353 378h1M357 378h1M361 378h1M115 379h1M119 379h1M123 379h1M354 379h1M358 379h1M361 379h1M114 380h1M118 380h1M122 380h1M126 380h1M350 380h1M355 380h1M359 380h1M362 380h1M113 381h1M117 381h1M121 381h1M125 381h1M351 381h1M355 381h1M359 381h1M363 381h1M116 382h1M120 382h1M124 382h1M352 382h1M356 382h1M360 382h1M364 382h1M115 383h1M120 383h1M124 383h1M132 383h1M353 383h1M357 383h1M361 383h1M119 384h1M123 384h1M131 384h1M345 384h1M354 384h1M358 384h1M362 384h1M118 385h1M122 385h1M131 385h1M134 385h1M346 385h1M354 385h1M358 385h1M121 386h1M130 386h1M133 386h1M343 386h1M347 386h1M355 386h1M359 386h1M120 387h1M129 387h1M133 387h1M137 387h1M344 387h1M347 387h1M356 387h1M128 388h1M132 388h1M136 388h1M341 388h1M345 388h1M348 388h1M357 388h1M128 389h1M131 389h1M136 389h1M139 389h1M341 389h1M345 389h1M349 389h1M127 390h1M130 390h1M135 390h1M138 390h1M338 390h1M342 390h1M346 390h1M350 390h1M126 391h1M130 391h1M134 391h1M138 391h1M338 391h1M343 391h1M347 391h1M350 391h1M129 392h1M133 392h1M137 392h1M145 392h1M339 392h1M343 392h1M348 392h1M351 392h1M128 393h1M133 393h1M137 393h1M144 393h1M332 393h1M340 393h1M344 393h1M348 393h1M132 394h1M136 394h1M144 394h1M147 394h1M333 394h1M340 394h1M345 394h1M349 394h1M131 395h1M135 395h1M143 395h1M146 395h1M150 395h1M330 395h1M334 395h1M341 395h1M345 395h1M135 396h1M142 396h1M146 396h1M149 396h1M327 396h1M330 396h1M334 396h1M342 396h1M346 396h1M134 397h1M142 397h1M145 397h1M149 397h1M153 397h1M328 397h1M331 397h1M335 397h1M342 397h1M141 398h1M145 398h1M148 398h1M152 398h1M325 398h1M328 398h1M332 398h1M336 398h1M343 398h1M140 399h1M144 399h1M148 399h1M152 399h1M325 399h1M329 399h1M332 399h1M337 399h1M140 400h1M143 400h1M147 400h1M151 400h1M158 400h1M326 400h1M329 400h1M333 400h1M337 400h1M139 401h1M143 401h1M147 401h1M151 401h1M158 401h1M161 401h1M319 401h1M326 401h1M330 401h1M334 401h1M338 401h1M142 402h1M146 402h1M150 402h1M157 402h1M161 402h1M316 402h1M319 402h1M327 402h1M330 402h1M334 402h1M146 403h1M150 403h1M157 403h1M160 403h1M164 403h1M313 403h1M316 403h1M320 403h1M327 403h1M331 403h1M335 403h1M145 404h1M149 404h1M156 404h1M160 404h1M163 404h1M167 404h1M310 404h1M313 404h1M317 404h1M320 404h1M328 404h1M331 404h1M149 405h1M156 405h1M159 405h1M163 405h1M167 405h1M310 405h1M314 405h1M317 405h1M321 405h1M328 405h1M332 405h1M148 406h1M155 406h1M159 406h1M162 406h1M166 406h1M173 406h1M311 406h1M314 406h1M318 406h1M321 406h1M329 406h1M155 407h1M158 407h1M162 407h1M166 407h1M173 407h1M304 407h1M311 407h1M315 407h1M318 407h1M322 407h1M154 408h1M158 408h1M162 408h1M165 408h1M172 408h1M176 408h1M301 408h1M305 408h1M312 408h1M315 408h1M319 408h1M322 408h1M154 409h1M157 409h1M161 409h1M165 409h1M172 409h1M175 409h1M179 409h1M298 409h1M301 409h1M305 409h1M312 409h1M316 409h1M319 409h1M323 409h1M157 410h1M161 410h1M164 410h1M171 410h1M175 410h1M178 410h1M182 410h1M295 410h1M298 410h1M302 410h1M306 410h1M312 410h1M316 410h1M320 410h1M160 411h1M164 411h1M171 411h1M174 411h1M178 411h1M181 411h1M295 411h1M299 411h1M302 411h1M306 411h1M313 411h1M317 411h1M320 411h1M160 412h1M163 412h1M171 412h1M174 412h1M177 412h1M181 412h1M188 412h1M191 412h1M289 412h1M296 412h1M299 412h1M303 412h1M306 412h1M313 412h1M317 412h1M163 413h1M170 413h1M174 413h1M177 413h1M180 413h1M187 413h1M191 413h1M194 413h1M286 413h1M289 413h1M296 413h1M299 413h1M303 413h1M307 413h1M314 413h1M170 414h1M173 414h1M177 414h1M180 414h1M187 414h1M190 414h1M194 414h1M197 414h1M280 414h1M283 414h1M287 414h1M290 414h1M296 414h1M300 414h1M304 414h1M307 414h1M314 414h1M169 415h1M173 415h1M176 415h1M180 415h1M187 415h1M190 415h1M193 415h1M197 415h1M203 415h1M280 415h1M284 415h1M287 415h1M290 415h1M297 415h1M300 415h1M304 415h1M308 415h1M169 416h1M172 416h1M176 416h1M179 416h1M187 416h1M190 416h1M193 416h1M196 416h1M203 416h1M206 416h1M209 416h1M271 416h1M274 416h1M280 416h1M284 416h1M287 416h1M290 416h1M297 416h1M300 416h1M305 416h1M308 416h1M172 417h1M175 417h1M179 417h1M186 417h1M190 417h1M193 417h1M196 417h1M203 417h1M206 417h1M209 417h1M212 417h1M265 417h1M268 417h1M271 417h1M274 417h1M281 417h1M284 417h1M288 417h1M291 417h1M297 417h1M301 417h1M305 417h1M175 418h1M178 418h1M186 418h1M189 418h1M193 418h1M196 418h1M202 418h1M206 418h1M209 418h1M212 418h1M218 418h1M222 418h1M225 418h1M255 418h1M258 418h1M265 418h1M268 418h1M271 418h1M275 418h1M281 418h1M285 418h1M288 418h1M291 418h1M298 418h1M301 418h1M178 419h1M186 419h1M189 419h1M192 419h1M196 419h1M202 419h1M205 419h1M208 419h1M212 419h1M218 419h1M222 419h1M225 419h1M228 419h1M234 419h1M237 419h1M239 419h1M243 419h1M249 419h1M252 419h1M255 419h1M258 419h1M265 419h1M268 419h1M272 419h1M275 419h1M281 419h1M285 419h1M288 419h1M291 419h1M298 419h1M185 420h1M189 420h1M192 420h1M195 420h1M202 420h1M205 420h1M208 420h1M212 420h1M218 420h1M222 420h1M225 420h1M228 420h1M234 420h1M237 420h1M239 420h1M243 420h1M249 420h1M252 420h1M255 420h1M258 420h1M265 420h1M268 420h1M272 420h1M275 420h1M281 420h1M285 420h1M288 420h1M292 420h1M185 421h1M188 421h1M192 421h1M195 421h1M202 421h1M205 421h1M208 421h1M212 421h1M218 421h1M222 421h1M225 421h1M228 421h1M234 421h1M237 421h1M239 421h1M243 421h1M249 421h1M252 421h1M255 421h1M258 421h1M265 421h1M268 421h1M272 421h1M275 421h1M281 421h1M285 421h1M289 421h1M292 421h1M188 422h1M191 422h1M195 422h1M202 422h1M205 422h1M208 422h1M212 422h1M218 422h1M222 422h1M225 422h1M228 422h1M234 422h1M237 422h1M239 422h1M243 422h1M249 422h1M252 422h1M255 422h1M258 422h1M266 422h1M269 422h1M272 422h1M275 422h1M282 422h1M286 422h1M289 422h1M191 423h1M194 423h1M201 423h1M205 423h1M208 423h1M211 423h1M218 423h1M222 423h1M225 423h1M228 423h1M234 423h1M237 423h1M239 423h1M243 423h1M249 423h1M252 423h1M256 423h1M259 423h1M266 423h1M269 423h1M272 423h1M276 423h1M282 423h1M286 423h1M194 424h1M201 424h1M204 424h1M207 424h1M211 424h1M217 424h1M221 424h1M224 424h1M227 424h1M234 424h1M237 424h1M239 424h1M243 424h1M249 424h1M253 424h1M256 424h1M259 424h1M266 424h1M269 424h1M273 424h1M276 424h1M282 424h1M201 425h1M204 425h1M207 425h1M211 425h1M217 425h1M221 425h1M224 425h1M227 425h1M234 425h1M237 425h1M239 425h1M243 425h1M249 425h1M253 425h1M256 425h1M259 425h1M266 425h1M269 425h1M273 425h1M276 425h1M204 426h1M207 426h1M211 426h1M217 426h1M221 426h1M224 426h1M227 426h1M234 426h1M237 426h1M239 426h1M243 426h1M249 426h1M253 426h1M256 426h1M259 426h1M266 426h1M269 426h1M273 426h1M211 427h1M217 427h1M221 427h1M224 427h1M227 427h1M234 427h1M237 427h1M239 427h1M243 427h1M249 427h1M253 427h1M256 427h1M259 427h1M266 427h1M269 427h1M217 428h1M221 428h1M224 428h1M227 428h1M234 428h1M237 428h1M239 428h1M243 428h1M249 428h1M253 428h1M256 428h1M259 428h1M227 429h1M234 429h1M237 429h1M239 429h1M243 429h1M249 429h1"/>
<path stroke="#0000ff" d="M300 32h5M297 33h3M305 33h1M296 34h1M306 34h3M295 35h1M305 35h1M309 35h1M294 36h1M304 36h1M310 36h1M304 37h1M310 37h1M296 38h3M304 38h1M310 38h1M295 39h1M299 39h1M305 39h1M309 39h1M294 40h1M300 40h1M306 40h3M294 41h1M300 41h1M294 42h1M300 42h1M310 42h1M295 43h1M299 43h1M309 43h1M296 44h3M308 44h1M299 45h1M305 45h3M326 45h3M300 46h5M325 46h1M329 46h2M326 47h1M330 47h1M327 48h1M331 48h1M327 49h1M331 49h1M327 50h1M331 50h1M326 51h1M330 51h1M325 52h1M329 52h2M326 53h3M371 135h1M374 135h1M377 135h1M371 136h1M373 136h1M375 136h1M377 136h1M371 137h1M374 137h1M377 137h1M372 138h1M376 138h1M373 139h3M374 140h1M372 141h5M374 142h1M374 143h1M626 166h1M629 166h1M632 166h1M625 167h2M628 167h2M631 167h1M625 168h1M627 168h2M630 168h2M624 169h1M627 169h1M630 169h1M626 171h1M629 171h1M632 171h1M625 172h2M628 172h2M631 172h1M625 173h1M627 173h2M630 173h2M624 174h1M627 174h1M630 174h1M76 185h1M79 185h1M82 185h1M75 186h2M78 186h3M82 186h2M76 187h1M79 187h1M82 187h1M77 188h1M79 188h1M81 188h1M78 189h3M79 190h1M343 190h1M77 191h5M341 191h1M79 192h1M339 192h1M79 193h1M337 193h1M333 194h1M335 194h1M331 195h1M329 196h1M327 197h1M325 198h1M323 199h1M321 200h1M317 201h1M319 201h1M315 202h1M313 203h1M311 204h1M309 205h1M307 206h1M625 206h1M632 206h1M305 207h1M626 207h6M301 208h1M303 208h1M627 208h1M630 208h1M299 209h1M627 209h1M630 209h1M297 210h1M627 210h1M630 210h1M295 211h1M627 211h1M630 211h1M293 212h1M627 212h1M630 212h1M626 213h6M289 214h1M625 214h1M632 214h1M285 215h1M287 215h1M283 216h1M281 217h1M279 218h1M277 219h1M275 220h1M273 221h1M269 222h1M271 222h1M267 223h1M265 224h1M263 225h1M261 226h1M259 227h1M257 228h1M253 229h1M255 229h1M251 230h1M249 231h1M247 232h1M245 233h1M243 234h1M241 235h1M237 236h1M239 236h1M235 237h1M233 238h1M231 239h1M229 240h1M227 241h1M225 242h1M221 243h1M223 243h1M219 244h1M217 245h1M215 246h1M213 247h1M211 248h1M627 248h3M209 249h1M626 249h1M630 249h1M205 250h1M207 250h1M626 250h1M630 250h1M203 251h1M624 251h4M629 251h4M27 252h1M30 252h1M33 252h1M201 252h1M27 253h1M29 253h1M31 253h1M33 253h1M199 253h1M624 253h9M27 254h1M30 254h1M33 254h1M197 254h1M28 255h1M32 255h1M195 255h1M29 256h3M193 256h1M30 257h1M189 257h1M191 257h1M28 258h5M187 258h1M30 259h1M185 259h1M30 260h1M183 260h1M181 261h1M179 262h1M177 263h1M173 264h1M175 264h1M171 265h1M169 266h1M167 267h1M165 268h1M163 269h1M161 270h1M157 271h1M159 271h1M155 272h1M153 273h1M151 274h1M26 275h1M30 275h1M34 275h1M149 275h1M27 276h1M29 276h1M31 276h1M33 276h1M35 276h1M147 276h1M626 276h3M28 277h1M32 277h1M36 277h1M145 277h1M625 277h1M629 277h2M28 278h1M32 278h1M36 278h1M141 278h1M143 278h1M626 278h1M630 278h1M28 279h1M32 279h1M36 279h1M139 279h1M627 279h1M631 279h1M28 280h1M32 280h1M36 280h1M137 280h1M627 280h1M631 280h1M28 281h1M32 281h1M36 281h1M135 281h1M627 281h1M631 281h1M28 282h1M32 282h1M36 282h1M626 282h1M630 282h1M28 283h1M32 283h1M36 283h1M128 283h1M625 283h1M629 283h2M28 284h1M32 284h1M36 284h1M127 284h3M626 284h3M28 285h1M32 285h1M36 285h1M102 285h5M128 285h1M28 286h1M32 286h1M36 286h1M41 286h1M101 286h1M107 286h2M28 287h1M32 287h1M36 287h1M40 287h3M100 287h1M109 287h1M28 288h1M32 288h1M36 288h1M41 288h1M101 288h1M110 288h1M28 289h1M32 289h1M36 289h1M41 289h1M102 289h1M111 289h1M37 290h1M40 290h1M103 290h1M112 290h1M38 291h2M104 291h1M112 291h1M104 292h1M112 292h1M104 293h1M112 293h1M104 294h1M112 294h1M104 295h1M112 295h1M103 296h1M112 296h1M102 297h1M111 297h1M101 298h1M110 298h1M100 299h1M109 299h1M101 300h1M108 300h1M341 300h1M102 301h6M340 301h3M341 302h1M350 314h1M356 314h1M362 314h1M350 315h1M356 315h1M362 315h1M349 316h3M354 316h5M361 316h3M350 317h1M356 317h1M362 317h1M350 318h1M356 318h1M362 318h1M351 319h1M356 319h1M362 319h1M351 320h1M356 320h1M361 320h1M352 321h2M356 321h1M359 321h2M354 322h5M356 323h1M356 324h1M356 325h1M352 326h9M356 327h1M356 328h1M356 329h1M356 330h1M625 346h1M628 346h1M631 346h1M624 347h2M627 347h3M631 347h2M625 348h1M628 348h1M631 348h1M626 349h1M628 349h1M630 349h1M627 350h3M628 351h1M626 352h5M628 353h1M628 354h1M625 356h1M628 356h1M631 356h1M625 357h1M627 357h1M629 357h1M631 357h1M243 358h1M625 358h1M628 358h1M631 358h1M242 359h3M626 359h1M630 359h1M243 360h1M627 360h3M628 361h1M626 362h5M628 363h1M628 364h1M238 375h1M243 375h3M250 375h1M238 376h1M242 376h1M246 376h1M250 376h1M238 377h1M242 377h1M246 377h1M250 377h1M238 378h1M242 378h1M246 378h1M250 378h1M238 379h1M243 379h3M250 379h1M239 380h1M249 380h1M240 381h1M248 381h1M241 382h1M247 382h1M242 383h5M244 384h1M244 385h1M244 386h1M372 386h1M388 386h1M240 387h9M373 387h1M387 387h1M244 388h1M374 388h1M386 388h1M244 389h1M375 389h1M385 389h1M244 390h1M376 390h1M385 390h1M244 391h1M376 391h1M384 391h1M376 392h1M384 392h1M376 393h1M384 393h1M372 394h17M376 395h1M384 395h1M376 396h1M384 396h1M376 397h1M384 397h1M276 398h3M376 398h1M385 398h1M275 399h1M279 399h2M375 399h1M385 399h1M276 400h1M280 400h1M374 400h1M386 400h1M277 401h1M281 401h1M373 401h1M387 401h1M277 402h1M281 402h1M372 402h1M388 402h1M277 403h1M281 403h1M276 404h1M280 404h1M275 405h1M279 405h2M276 406h3M356 407h1M359 407h1M362 407h1M355 408h2M358 408h3M362 408h2M356 409h1M359 409h1M362 409h1M357 410h1M359 410h1M361 410h1M358 411h3M359 412h1M357 413h5M359 414h1M359 415h1"/>
<path stroke="#00ff00" d="M117 63h1M121 63h1M118 64h3M117 65h1M121 65h1M117 66h1M121 66h1M117 67h1M121 67h1M118 68h3M119 69h1M117 70h5M119 71h1M388 90h1M402 90h1M389 91h1M401 91h1M390 92h11M392 93h1M398 93h1M392 94h1M398 94h1M392 95h1M398 95h1M392 96h1M398 96h1M392 97h1M398 97h1M392 98h1M398 98h1M392 99h1M398 99h1M392 100h1M398 100h1M392 101h1M398 101h1M392 102h1M398 102h1M392 103h1M398 103h1M390 104h11M389 105h1M401 105h1M388 106h1M402 106h1M409 115h1M413 115h1M410 116h3M117 117h1M123 117h1M409 117h1M413 117h1M118 118h1M122 118h1M409 118h1M413 118h1M118 119h1M120 119h1M122 119h1M409 119h1M413 119h1M118 120h5M410 120h3M118 121h1M120 121h1M122 121h1M411 121h1M117 122h1M120 122h1M123 122h1M409 122h5M119 123h3M411 123h1M119 124h1M121 124h1M120 125h1M273 130h1M273 131h1M273 132h1M274 133h1M274 134h1M274 135h1M274 136h1M275 137h1M275 138h1M275 139h1M275 140h1M275 141h2M276 142h1M276 143h1M276 144h1M276 145h2M277 146h1M277 147h1M277 148h1M277 149h2M277 150h1M278 151h1M278 152h1M278 153h2M278 154h1M279 155h1M279 156h1M625 156h1M628 156h1M630 156h2M279 157h2M624 157h2M628 157h2M632 157h1M279 158h1M625 158h1M627 158h2M630 158h1M632 158h1M279 159h2M625 159h1M627 159h1M630 159h2M280 160h1M625 160h1M627 160h1M632 160h1M280 161h2M626 161h1M632 161h1M280 162h1M626 162h1M632 162h1M280 163h2M626 163h1M632 163h1M281 164h1M631 164h1M281 165h2M281 166h1M281 167h2M281 168h1M282 169h2M282 170h1M363 170h1M375 170h1M282 171h2M364 171h1M374 171h1M37 172h5M282 172h1M365 172h1M373 172h1M36 173h1M42 173h1M283 173h2M365 173h1M373 173h1M35 174h1M43 174h1M283 174h1M365 174h1M369 174h1M373 174h1M35 175h1M43 175h1M283 175h2M365 175h1M369 175h1M373 175h1M35 176h1M43 176h1M283 176h1M365 176h9M36 177h1M42 177h1M283 177h1M285 177h1M365 177h1M369 177h1M373 177h1M31 178h7M41 178h7M284 178h1M365 178h1M369 178h1M373 178h1M284 179h2M364 179h1M369 179h1M374 179h1M284 180h1M363 180h1M369 180h1M375 180h1M284 181h1M286 181h1M369 181h1M31 182h17M285 182h1M367 182h5M285 183h2M367 183h1M371 183h1M285 184h1M367 184h1M371 184h1M285 185h1M287 185h1M368 185h1M370 185h1M285 186h1M369 186h1M286 187h2M347 187h1M286 188h1M346 188h3M286 189h1M288 189h1M347 189h1M286 190h1M287 191h2M287 192h1M287 193h1M289 193h1M287 194h1M341 194h1M287 195h1M290 195h1M288 196h1M625 196h1M631 196h1M288 197h1M290 197h1M626 197h1M630 197h1M288 198h1M338 198h1M627 198h3M288 199h1M291 199h1M626 199h1M630 199h1M289 200h1M625 200h1M631 200h1M289 201h1M291 201h1M625 201h1M631 201h1M289 202h1M336 202h1M625 202h1M631 202h1M289 203h1M292 203h1M626 203h1M630 203h1M289 204h1M627 204h3M290 205h1M292 205h1M290 206h1M333 206h1M290 207h1M293 207h1M290 208h1M291 209h1M293 209h1M291 210h1M331 210h1M291 211h1M294 211h1M291 212h1M291 213h1M294 213h1M292 214h1M328 214h1M292 215h1M295 215h1M292 216h1M292 217h1M295 217h1M293 218h1M326 218h1M293 219h1M296 219h1M293 220h1M293 221h1M296 221h1M293 222h1M323 222h1M294 223h1M297 223h1M294 224h1M294 225h1M297 225h1M294 226h1M321 226h1M295 227h1M298 227h1M295 228h1M295 229h1M298 229h1M295 230h1M319 230h1M295 231h1M299 231h1M296 232h1M296 233h1M299 233h1M296 234h1M316 234h1M296 235h1M300 235h1M296 236h1M624 236h1M626 236h1M628 236h1M297 237h1M300 237h1M625 237h1M627 237h1M629 237h1M631 237h1M297 238h1M314 238h1M625 238h1M627 238h1M629 238h3M297 239h1M301 239h1M625 239h1M627 239h1M629 239h1M631 239h1M297 240h1M625 240h1M627 240h1M629 240h1M631 240h1M298 241h1M301 241h1M625 241h1M627 241h1M629 241h1M631 241h1M298 242h1M311 242h1M625 242h1M627 242h1M629 242h1M631 242h1M298 243h1M302 243h1M625 243h1M627 243h1M630 243h1M298 244h1M629 244h1M631 244h1M298 245h1M302 245h1M299 246h1M309 246h1M299 247h1M303 247h1M299 248h1M299 249h1M303 249h1M300 250h1M306 250h1M300 251h1M304 251h1M300 252h1M300 253h1M304 253h1M300 254h1M304 254h1M301 255h1M305 255h1M301 256h1M301 257h1M305 257h1M301 258h2M302 259h1M306 259h1M302 260h1M302 261h1M306 261h1M299 262h1M302 262h1M302 263h1M307 263h1M303 264h1M303 265h1M307 265h1M297 266h1M303 266h1M303 267h1M308 267h1M304 268h1M304 269h1M308 269h1M294 270h1M304 270h1M304 271h1M309 271h1M304 272h1M305 273h1M309 273h1M292 274h1M305 274h1M305 275h1M310 275h1M305 276h1M306 277h1M310 277h1M289 278h1M306 278h1M306 279h1M311 279h1M306 280h1M306 281h1M311 281h1M133 282h1M137 282h1M287 282h1M307 282h1M137 283h1M141 283h1M145 283h1M149 283h1M153 283h1M307 283h1M312 283h1M141 284h1M145 284h1M153 284h1M157 284h1M161 284h1M165 284h1M169 284h1M307 284h1M149 285h1M165 285h1M169 285h1M173 285h1M177 285h1M181 285h1M307 285h1M312 285h1M397 285h1M401 285h1M153 286h1M177 286h1M181 286h1M185 286h1M189 286h1M193 286h1M197 286h1M284 286h1M308 286h1M398 286h3M626 286h1M630 286h1M157 287h1M189 287h1M193 287h1M197 287h1M201 287h1M205 287h1M209 287h1M213 287h1M308 287h1M313 287h1M397 287h1M401 287h1M627 287h3M161 288h1M165 288h1M201 288h1M205 288h1M209 288h1M217 288h1M221 288h1M225 288h1M308 288h1M397 288h1M401 288h1M626 288h1M630 288h1M169 289h1M213 289h1M217 289h1M221 289h1M229 289h1M233 289h1M237 289h1M241 289h1M308 289h1M313 289h1M397 289h1M401 289h1M626 289h1M630 289h1M173 290h1M225 290h1M229 290h1M233 290h1M245 290h1M249 290h1M253 290h1M257 290h1M282 290h1M308 290h1M398 290h3M626 290h1M630 290h1M177 291h1M181 291h1M237 291h1M241 291h1M245 291h1M261 291h1M265 291h1M269 291h1M309 291h1M314 291h1M399 291h1M627 291h3M185 292h1M249 292h1M253 292h1M257 292h1M273 292h1M277 292h1M281 292h1M285 292h1M309 292h1M397 292h5M628 292h1M189 293h1M261 293h1M265 293h1M269 293h1M289 293h1M293 293h1M297 293h1M301 293h1M309 293h1M314 293h1M399 293h1M626 293h5M193 294h1M273 294h1M277 294h1M280 294h2M305 294h1M309 294h1M313 294h1M628 294h1M197 295h1M201 295h1M285 295h1M289 295h1M293 295h1M310 295h1M315 295h1M317 295h1M321 295h1M325 295h1M329 295h1M205 296h1M297 296h1M301 296h1M305 296h1M310 296h1M333 296h1M337 296h1M209 297h1M309 297h2M313 297h1M315 297h1M317 297h1M213 298h1M277 298h1M310 298h1M321 298h1M325 298h1M329 298h1M217 299h1M221 299h1M310 299h1M316 299h1M333 299h1M337 299h1M225 300h1M311 300h1M229 301h1M311 301h1M316 301h1M233 302h1M237 302h1M275 302h1M311 302h1M241 303h1M311 303h1M317 303h1M245 304h1M312 304h1M249 305h1M312 305h1M317 305h1M253 306h1M257 306h1M272 306h1M312 306h1M261 307h1M312 307h1M318 307h1M265 308h1M312 308h1M269 309h1M313 309h1M318 309h1M270 310h1M273 310h1M277 310h1M313 310h1M281 311h1M313 311h1M319 311h1M285 312h1M313 312h1M289 313h1M293 313h1M314 313h1M319 313h1M267 314h1M297 314h1M314 314h1M301 315h1M314 315h1M320 315h1M305 316h1M314 316h1M309 317h1M313 317h2M320 317h1M265 318h1M315 318h1M317 318h1M315 319h1M321 319h1M315 320h1M315 321h1M263 322h1M316 322h1M316 323h1M316 324h1M260 326h1M320 326h1M319 327h3M320 328h1M258 330h1M255 334h1M625 336h1M631 336h1M626 337h1M630 337h1M253 338h1M626 338h1M628 338h1M630 338h1M626 339h5M626 340h1M628 340h1M630 340h1M625 341h1M628 341h1M631 341h1M250 342h1M326 342h1M334 342h1M627 342h3M327 343h1M333 343h1M627 343h1M629 343h1M328 344h5M628 344h1M327 345h1M333 345h1M248 346h1M326 346h1M334 346h1M326 347h1M334 347h1M326 348h1M334 348h1M326 349h1M334 349h1M245 350h1M326 350h1M334 350h1M327 351h1M333 351h1M328 352h5M330 353h1M330 354h1M330 355h1M326 356h9M330 357h1M330 358h1M178 392h1M182 392h1M179 393h3M178 394h1M182 394h1M178 395h1M182 395h1M178 396h1M182 396h1M179 397h3M180 398h1M178 399h5M180 400h1M279 436h1M285 436h1M291 436h1M278 437h2M284 437h2M290 437h1M278 438h1M280 438h1M284 438h1M286 438h1M290 438h1M277 439h1M280 439h1M283 439h1M286 439h1M289 439h1M276 440h1M280 440h1M282 440h1M286 440h1M288 440h1M276 441h1M281 441h2M287 441h2M275 442h1M281 442h1M287 442h1M253 444h1M259 444h1M254 445h1M258 445h1M254 446h1M256 446h1M258 446h1M279 446h1M285 446h1M291 446h1M254 447h5M278 447h2M284 447h2M290 447h1M254 448h1M256 448h1M258 448h1M278 448h1M280 448h1M284 448h1M286 448h1M290 448h1M253 449h1M256 449h1M259 449h1M277 449h1M280 449h1M283 449h1M286 449h1M289 449h1M255 450h3M276 450h1M280 450h1M282 450h1M286 450h1M288 450h1M255 451h1M257 451h1M276 451h1M281 451h2M287 451h2M256 452h1M275 452h1M281 452h1M287 452h1"/>
<path stroke="#00ffff" d="M343 191h1M343 192h1M343 193h1M343 194h1M343 196h1M343 197h1M343 198h1M343 199h1M342 200h2M342 202h2M342 203h1M342 204h1M342 205h1M342 206h1M342 208h1M342 209h1M342 210h1M342 211h1M342 212h1M342 214h1M342 215h1M342 216h1M342 217h1M341 218h2M341 220h2M342 221h1M341 222h1M342 223h1M341 224h1M341 226h2M341 227h1M341 228h1M342 229h1M341 230h1M341 232h1M341 233h1M341 234h1M341 235h1M340 236h2M340 238h2M341 239h1M340 240h1M341 241h1M340 242h2M340 244h2M340 245h1M340 246h1M341 247h1M340 248h1M340 250h2M340 251h1M340 252h1M341 253h1M339 254h2M339 256h2M340 257h1M339 258h1M340 259h1M339 260h2M339 262h2M340 263h1M339 264h1M340 265h1M339 266h1M339 268h2M339 269h1M339 270h1M340 271h1M338 272h2M338 274h1M340 274h1M339 275h1M338 276h1M340 277h1M338 278h2M338 280h1M340 280h1M339 281h1M338 282h1M339 283h1M338 284h2M338 286h2M338 287h1M338 288h1M339 289h1M337 290h2M337 292h1M339 292h1M338 293h1M337 294h1M335 297h2M334 298h1M332 299h1M331 300h2M335 300h1M329 301h2M333 301h1M327 302h2M326 303h1M331 303h1M324 304h2M329 304h1M322 305h3M327 305h1M321 306h2M325 306h1M319 307h2M323 307h1M318 308h1M321 308h1M316 309h2M314 310h2M319 310h1M314 311h1M317 311h1M311 312h2M315 312h1M309 313h2M313 313h1M308 314h1M311 314h1M306 315h2M309 315h1M306 316h1M303 317h2M307 317h1M301 318h2M305 318h1M300 319h1M303 319h1M298 320h2M301 320h1M296 321h2M299 321h1M295 322h3M293 323h2M292 324h1M295 324h1M290 325h2M293 325h1M288 326h2M291 326h1M287 327h3M285 328h3M283 329h3M282 330h1M280 331h2M283 331h1M278 332h2M281 332h1M277 333h3M275 334h3M274 335h2M272 336h2M270 337h2M269 338h3M267 339h3M265 340h3M264 341h2M262 342h2M261 343h1M259 344h2M257 345h3M256 346h2M254 347h2M252 348h2M251 349h2M249 350h2M248 351h1M246 352h2M244 353h2M243 354h1"/>
<path stroke="#ff0000" d="M193 26h5M221 26h3M192 27h1M198 27h1M219 27h2M224 27h2M191 28h1M199 28h1M219 28h1M225 28h1M190 29h1M200 29h1M218 29h1M226 29h1M189 30h1M201 30h1M218 30h1M222 30h1M226 30h1M189 31h1M201 31h1M218 31h1M226 31h1M189 32h1M201 32h1M219 32h1M225 32h1M189 33h1M201 33h1M219 33h2M224 33h2M189 34h1M201 34h1M221 34h3M190 35h1M200 35h1M191 36h1M199 36h1M191 37h1M199 37h1M187 38h1M191 38h1M199 38h1M188 39h1M190 39h1M200 39h1M189 40h1M201 40h1M202 41h1M203 42h1M301 78h1M295 79h2M300 79h1M297 80h1M300 80h1M297 81h1M300 81h1M296 82h1M300 82h1M296 83h1M300 83h1M295 84h1M300 84h1M295 85h8M300 86h1M288 94h1M287 95h1M277 96h3M286 96h1M280 97h1M286 97h1M280 98h1M286 98h1M280 99h1M286 99h1M280 100h1M286 100h1M280 101h1M286 101h1M279 102h1M286 102h1M279 103h1M286 103h1M278 104h1M286 104h1M278 105h1M286 105h1M277 106h1M286 106h1M277 107h1M286 107h1M276 108h15M286 109h1M286 110h1M275 124h1M274 125h3M275 126h1M624 136h1M626 136h1M628 136h1M625 137h1M627 137h1M629 137h1M625 138h1M627 138h1M629 138h1M625 139h1M627 139h1M629 139h1M625 140h1M627 140h1M629 140h1M625 141h1M627 141h1M629 141h1M625 142h1M627 142h1M629 142h1M632 142h1M625 143h1M627 143h1M629 143h1M632 143h1M630 144h2M624 176h1M632 176h1M625 177h1M631 177h1M626 178h1M630 178h1M626 179h1M630 179h1M624 180h9M626 181h1M630 181h1M626 182h1M630 182h1M625 183h1M631 183h1M624 184h1M632 184h1M627 217h3M625 218h2M630 218h2M624 219h1M629 219h1M632 219h1M625 220h2M629 220h1M632 220h1M624 221h1M627 221h1M630 221h2M624 222h1M627 222h1M632 222h1M625 223h2M630 223h2M627 224h3M75 255h3M76 256h2M75 257h1M77 257h1M71 258h2M74 258h1M70 259h1M73 259h1M69 260h1M74 260h1M69 261h1M74 261h1M70 262h1M73 262h1M71 263h2M627 266h3M625 267h2M630 267h2M625 268h1M631 268h1M624 269h1M632 269h1M624 270h1M628 270h1M632 270h1M624 271h1M632 271h1M625 272h1M631 272h1M625 273h2M630 273h2M627 274h3M433 294h3M443 294h3M432 295h1M436 295h1M442 295h1M446 295h1M431 296h1M437 296h1M441 296h1M447 296h1M431 297h1M437 297h1M441 297h1M447 297h1M431 298h1M437 298h1M441 298h1M447 298h1M432 299h1M437 299h1M441 299h1M446 299h1M433 300h1M437 300h1M441 300h1M445 300h1M438 301h1M440 301h1M439 302h1M439 303h1M439 304h1M439 305h1M439 306h1M630 306h3M439 307h1M631 307h2M439 308h1M630 308h1M632 308h1M439 309h1M626 309h2M629 309h1M439 310h1M625 310h1M628 310h1M624 311h1M629 311h1M624 312h1M629 312h1M625 313h1M628 313h1M626 314h2M631 316h1M625 317h2M630 317h1M627 318h1M630 318h1M627 319h1M630 319h1M626 320h1M630 320h1M325 321h1M626 321h1M630 321h1M324 322h3M625 322h1M630 322h1M325 323h1M625 323h8M431 324h3M630 324h1M432 325h2M431 326h1M433 326h1M427 327h2M430 327h1M426 328h1M429 328h1M342 329h5M425 329h1M430 329h1M340 330h2M347 330h2M425 330h1M430 330h1M339 331h1M349 331h1M426 331h1M429 331h1M338 332h1M350 332h1M427 332h2M337 333h1M351 333h1M337 334h1M351 334h1M336 335h1M352 335h1M336 336h1M352 336h1M336 337h1M344 337h1M352 337h1M336 338h1M352 338h1M303 339h1M336 339h1M352 339h1M302 340h3M337 340h1M351 340h1M303 341h1M337 341h1M351 341h1M338 342h1M350 342h1M339 343h1M349 343h1M340 344h2M347 344h2M342 345h5M318 353h6M357 353h3M322 354h2M355 354h2M360 354h2M70 355h1M321 355h1M323 355h1M355 355h1M361 355h1M64 356h2M69 356h1M320 356h1M323 356h1M354 356h1M362 356h1M66 357h1M69 357h1M319 357h1M323 357h1M354 357h1M358 357h1M362 357h1M66 358h1M69 358h1M318 358h1M323 358h1M354 358h1M362 358h1M65 359h1M69 359h1M310 359h5M317 359h1M355 359h1M361 359h1M65 360h1M69 360h1M309 360h1M315 360h2M355 360h2M360 360h2M64 361h1M69 361h1M308 361h1M316 361h1M357 361h3M64 362h8M307 362h1M317 362h1M69 363h1M307 363h1M317 363h1M307 364h1M317 364h1M307 365h1M317 365h1M307 366h1M317 366h1M308 367h1M316 367h1M309 368h1M315 368h1M310 369h5M88 372h5M91 373h2M90 374h1M92 374h1M89 375h1M92 375h1M88 376h1M92 376h1M87 377h1M78 378h1M86 378h1M79 379h1M85 379h1M80 380h1M84 380h1M81 381h1M83 381h1M82 382h1M81 383h1M83 383h1M80 384h1M84 384h1M79 385h1M85 385h1M78 386h1M86 386h1M77 387h1M76 388h1"/>
<path stroke="#ffff00" d="M199 72h1M197 73h5M199 74h1M199 75h1M201 75h2M90 76h1M94 76h1M98 76h1M199 76h2M203 76h1M91 77h1M93 77h1M95 77h1M97 77h1M99 77h1M199 77h1M203 77h1M92 78h1M96 78h1M100 78h1M104 78h1M199 78h1M202 78h1M92 79h1M96 79h1M100 79h1M103 79h2M199 79h1M202 79h1M92 80h1M96 80h1M100 80h1M102 80h1M104 80h1M203 80h1M92 81h1M96 81h1M100 81h2M104 81h1M92 82h1M96 82h1M100 82h1M104 82h1M92 83h1M96 83h1M100 83h1M104 83h1M92 84h1M96 84h1M100 84h1M104 84h1M92 85h1M96 85h1M100 85h1M104 85h1M92 86h1M96 86h1M100 86h1M104 86h1M92 87h1M96 87h1M100 87h1M104 87h1M92 88h1M96 88h1M100 88h1M104 88h1M92 89h1M96 89h1M101 89h1M103 89h1M92 90h1M96 90h1M102 90h1M101 91h1M103 91h1M100 92h1M104 92h1M48 146h3M630 146h3M47 147h1M51 147h1M631 147h2M47 148h1M51 148h1M630 148h1M632 148h1M47 149h1M51 149h1M625 149h1M629 149h1M48 150h3M626 150h1M628 150h1M49 151h1M627 151h1M47 152h5M626 152h1M628 152h1M49 153h1M625 153h1M629 153h1M49 154h1M624 154h1M625 186h2M630 186h2M438 187h1M450 187h1M624 187h1M627 187h1M629 187h1M632 187h1M439 188h1M449 188h1M624 188h1M627 188h1M629 188h1M632 188h1M440 189h1M448 189h1M625 189h1M627 189h1M629 189h1M631 189h1M441 190h1M447 190h1M628 190h1M442 191h5M628 191h1M441 192h1M447 192h1M628 192h1M440 193h1M448 193h1M628 193h1M439 194h1M449 194h1M628 194h1M438 195h1M450 195h1M438 196h1M450 196h1M438 197h1M450 197h1M438 198h1M450 198h1M438 199h1M450 199h1M439 200h1M449 200h1M440 201h1M448 201h1M441 202h1M447 202h1M442 203h5M404 215h3M403 216h1M407 216h1M403 217h1M407 217h1M403 218h1M407 218h1M447 218h3M404 219h3M446 219h1M450 219h1M405 220h1M446 220h1M450 220h1M403 221h5M446 221h1M450 221h1M405 222h1M447 222h3M405 223h1M448 223h1M446 224h5M448 225h1M448 226h1M627 226h3M626 227h1M630 227h1M625 228h1M631 228h1M625 229h1M631 229h1M625 230h1M631 230h1M626 231h1M630 231h1M624 232h1M626 232h1M630 232h1M625 233h1M631 233h1M632 234h1M372 281h5M371 282h1M377 282h1M370 283h1M378 283h1M370 284h1M378 284h1M370 285h1M378 285h1M370 286h1M378 286h1M370 287h1M378 287h1M371 288h1M377 288h1M372 289h5M374 290h1M374 291h1M374 292h1M370 293h9M374 294h1M339 295h1M374 295h1M338 296h1M343 296h1M374 296h1M627 296h3M338 297h1M342 297h3M374 297h1M626 297h1M630 297h1M337 298h1M343 298h1M364 298h1M626 298h1M630 298h1M342 299h3M364 299h1M626 299h1M630 299h1M343 300h1M360 300h9M627 300h3M364 301h1M628 301h1M364 302h1M626 302h5M364 303h1M628 303h1M364 304h1M368 304h3M628 304h1M364 305h1M367 305h1M371 305h1M364 306h3M372 306h1M364 307h1M372 307h1M364 308h1M372 308h1M364 309h1M371 309h1M364 310h1M370 310h1M364 311h1M370 311h1M364 312h1M370 312h1M371 313h1M372 314h1M319 321h1M317 323h1M627 326h1M625 327h5M627 328h1M627 329h1M629 329h2M627 330h2M631 330h1M627 331h1M631 331h1M627 332h1M630 332h1M627 333h1M630 333h1M631 334h1M103 335h3M102 336h1M106 336h1M102 337h1M106 337h1M102 338h1M106 338h1M103 339h3M104 340h1M102 341h5M104 342h1M104 343h1M149 425h1M147 426h5M149 427h1M149 428h1M151 428h2M149 429h2M153 429h1M149 430h1M153 430h1M149 431h1M152 431h1M170 431h1M176 431h1M180 431h3M149 432h1M152 432h1M169 432h2M176 432h1M179 432h1M183 432h1M153 433h1M168 433h1M170 433h1M176 433h3M184 433h1M170 434h1M175 434h1M177 434h2M184 434h1M170 435h1M174 435h1M179 435h1M184 435h1M170 436h1M174 436h1M180 436h1M183 436h1M170 437h1M174 437h1M180 437h3M170 438h1M174 438h1M182 438h1M170 439h1M174 439h1M183 439h1M171 440h1M173 440h1M184 440h1M172 441h1M184 441h1M172 442h1M184 442h1M172 443h1M184 443h1M172 444h1M184 444h1M172 445h1M184 445h1M183 446h1M182 447h1"/>
</g>
<text class="h" x="76" y="284.5" fill="#ff0000" text-anchor="middle">1</text>
<text class="h" x="120" y="361.5" fill="#ffff00" text-anchor="middle">2</text>
<text class="h" x="205" y="407.5" fill="#00ff00" text-anchor="middle">3</text>
<text class="h" x="301" y="399.5" fill="#0000ff" text-anchor="middle">4</text>
<text class="h" x="372" y="345.5" fill="#ff0000" text-anchor="middle">5</text>
<text class="h" x="403" y="277.5" fill="#ffff00" text-anchor="middle">6</text>
<text class="h" x="402" y="202.5" fill="#00ff00" text-anchor="middle">7</text>
<text class="h" x="358" y="125.5" fill="#0000ff" text-anchor="middle">8</text>
<text class="h" x="273" y="79.5" fill="#ff0000" text-anchor="middle">9</text>
<text class="h" x="177" y="87.5" fill="#ffff00" text-anchor="middle">10</text>
<text class="h" x="106" y="141.5" fill="#00ff00" text-anchor="middle">11</text>
<text class="h" x="75" y="209.5" fill="#0000ff" text-anchor="middle">12</text>
</svg>
<div id="side"><div><span style="color:#ffffff">Astrolog 5.41G</span></div><div><span style="color:#c0c0c0">Chart of the Moment</span></div><div><span style="color:#ffffff">Sun March 8, 2026</span></div><div><span style="color:#ffffff">10:45:00pm (DT -8:00 GMT)</span></div><div><span style="color:#c0c0c0">San Francisco, CA</span></div><div><span style="color:#c0c0c0">122°41'00"W 37°79'00"N</span></div><div><span style="color:#c0c0c0">Placidus houses.</span></div><div><span style="color:#c0c0c0">Tropical, Geocentric.</span></div><div><span style="color:#ffffff">Julian Day = 2461108.7396</span></div><div><span style="color:#c0c0c0">Obliquity = 23°26'09"</span></div><div><span style="color:#c0c0c0">Sidereal time:  8:42:01</span></div><div><span style="color:#c0c0c0">DeltaT =  95.4412</span></div><div></div><div><span style="color:#ff0000"> 1st house: </span><span style="color:#0000ff"> 2Sco42</span></div><div><span style="color:#ffff00"> 2nd house: </span><span style="color:#ff0000"> 1Sag14</span></div><div><span style="color:#00ff00"> 3rd house: </span><span style="color:#ffff00"> 3Cap31</span></div><div><span style="color:#0000ff"> 4th house: </span><span style="color:#00ff00"> 8Aqu05</span></div><div><span style="color:#ff0000"> 5th house: </span><span style="color:#0000ff">11Pis01</span></div><div><span style="color:#ffff00"> 6th house: </span><span style="color:#ff0000"> 9Ari19</span></div><div><span style="color:#00ff00"> 7th house: </span><span style="color:#ffff00"> 2Tau42</span></div><div><span style="color:#0000ff"> 8th house: </span><span style="color:#00ff00"> 1Gem14</span></div><div><span style="color:#ff0000"> 9th house: </span><span style="color:#0000ff"> 3Can31</span></div><div><span style="color:#ffff00">10th house: </span><span style="color:#ff0000"> 8Leo05</span></div><div><span style="color:#00ff00">11th house: </span><span style="color:#ffff00">11Vir01</span></div><div><span style="color:#0000ff">12th house: </span><span style="color:#00ff00"> 9Lib19</span></div><div></div><div><span style="color:#ff0000"> Sun: </span><span style="color:#0000ff">18Pis40</span><span style="color:#ffffff"> </span><span style="color:#c0c0c0"> - 0°00'</span></div><div><span style="color:#0000ff">Moon: </span><span style="color:#0000ff">25Sco06</span><span style="color:#ffffff"> </span><span style="color:#c0c0c0"> - 5°07'</span></div><div><span style="color:#00ff00">Merc: </span><span style="color:#0000ff">15Pis05</span><span style="color:#ffffff">R</span><span style="color:#c0c0c0"> + 3°29'</span></div><div><span style="color:#ffff00">Venu: </span><span style="color:#ff0000"> 3Ari28</span><span style="color:#ffffff"> </span><span style="color:#c0c0c0"> - 1°12'</span></div><div><span style="color:#ff0000">Mars: </span><span style="color:#0000ff"> 5Pis14</span><span style="color:#ffffff"> </span><span style="color:#c0c0c0"> - 1°06'</span></div><div><span style="color:#ff0000">Jupi: </span><span style="color:#0000ff">15Can06</span><span style="color:#ffffff">R</span><span style="color:#c0c0c0"> + 0°21'</span></div><div><span style="color:#ffff00">Satu: </span><span style="color:#ff0000"> 2Ari43</span><span style="color:#ffffff"> </span><span style="color:#c0c0c0"> - 2°08'</span></div><div><span style="color:#00ff00">Uran: </span><span style="color:#ffff00">27Tau56</span><span style="color:#ffffff"> </span><span style="color:#c0c0c0"> - 0°11'</span></div><div><span style="color:#0000ff">Nept: </span><span style="color:#ff0000"> 1Ari21</span><span style="color:#ffffff"> </span><span style="color:#c0c0c0"> - 1°18'</span></div><div><span style="color:#0000ff">Plut: </span><span style="color:#00ff00"> 4Aqu45</span><span style="color:#ffffff"> </span><span style="color:#c0c0c0"> - 3°53'</span></div><div></div><div><span style="color:#c0c0c0">Fire: 3, Earth: 1,</span></div><div><span style="color:#c0c0c0">Air : 1, Water: 5</span></div><div><span style="color:#c0c0c0">Car: 4, Fix: 3, Mut: 3</span></div><div><span style="color:#c0c0c0">Yang: 4, Yin: 6</span></div><div><span style="color:#c0c0c0">M: 2, N: 8, A: 2, D: 8</span></div><div><span style="color:#c0c0c0">Ang: 3, Suc: 5, Cad: 2</span></div><div><span style="color:#c0c0c0">Learn: 5, Share: 5</span></div></div></body></html>
